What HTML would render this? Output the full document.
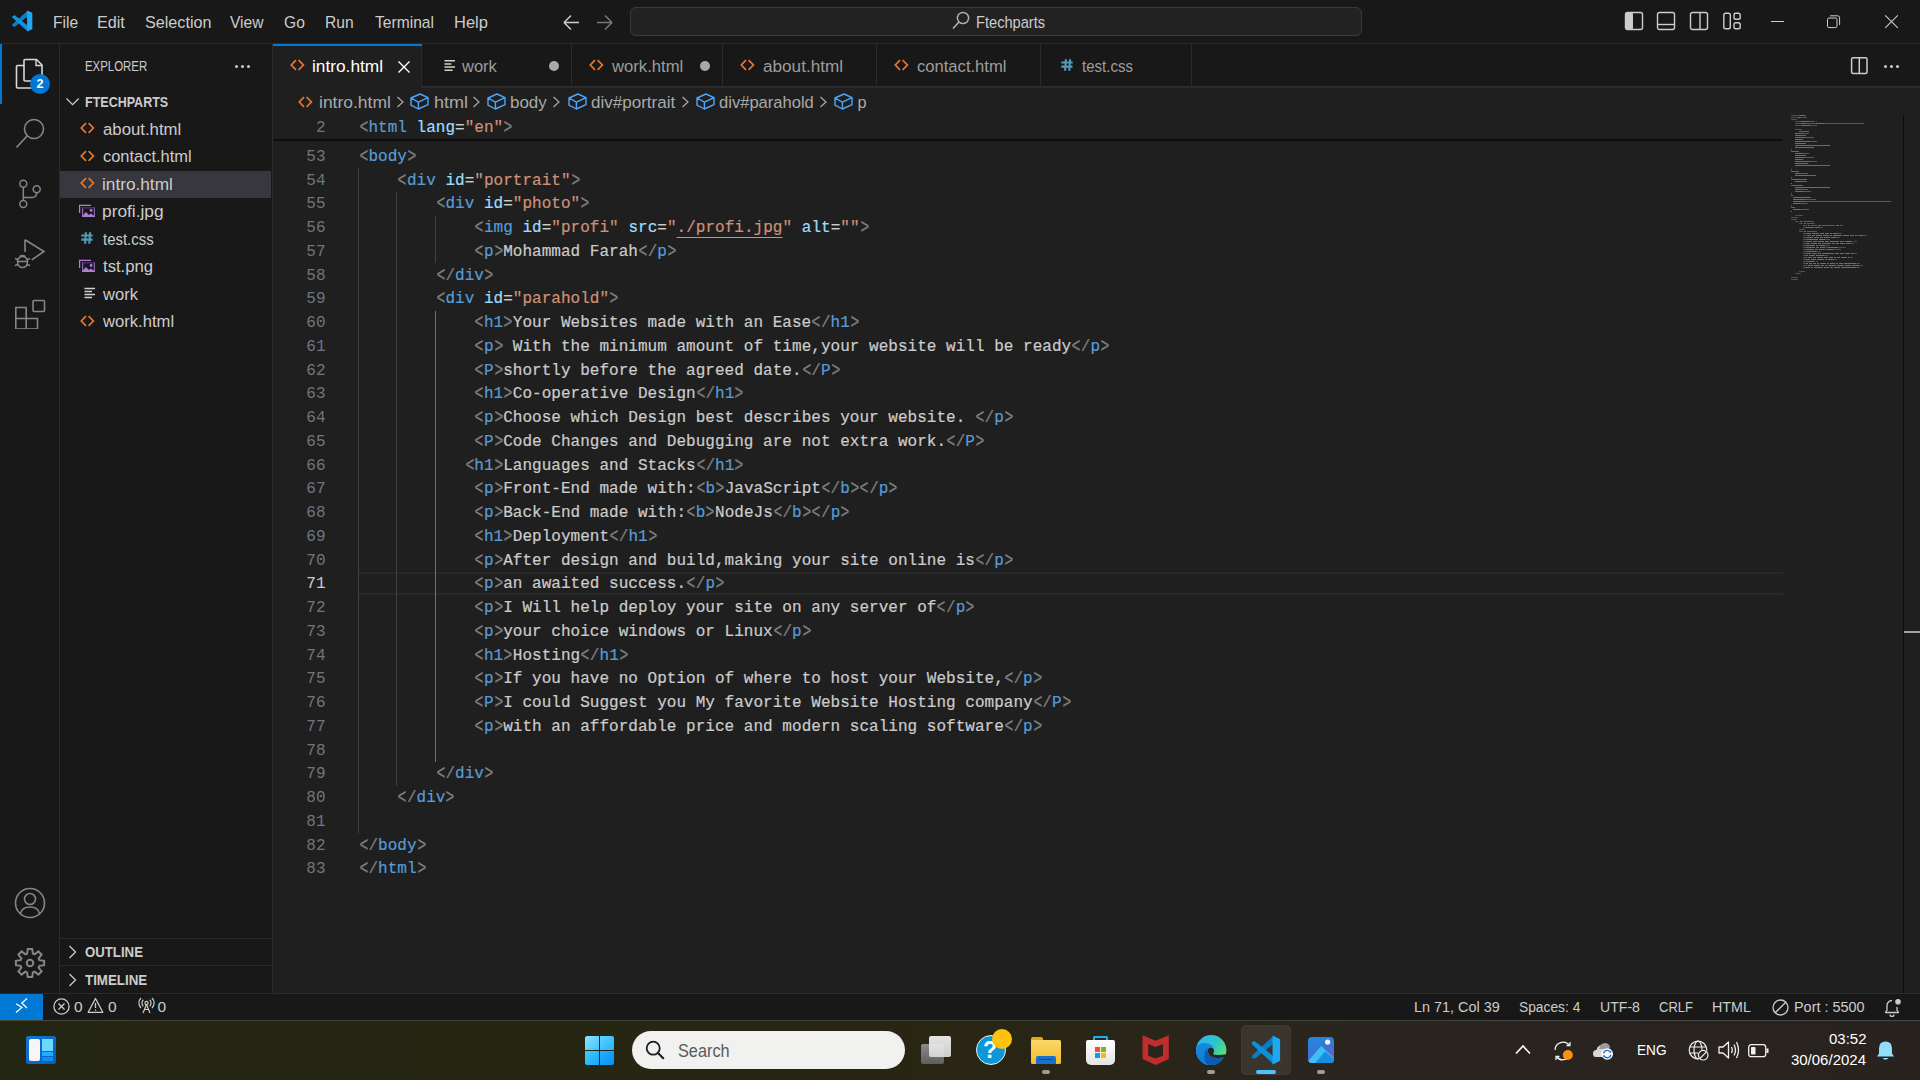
<!DOCTYPE html>
<html><head><meta charset="utf-8">
<style>
*{margin:0;padding:0;box-sizing:border-box}
html,body{width:1920px;height:1080px;overflow:hidden;background:#1f1f1f;font-family:"Liberation Sans",sans-serif;color:#cccccc}
.a{position:absolute}
#title{left:0;top:0;width:1920px;height:44px;background:#181818;border-bottom:1px solid #2b2b2b}
.menu{top:0.3px;height:44px;line-height:44px;font-size:16.25px;color:#cccccc;white-space:nowrap;transform:scaleX(.96);transform-origin:left}
#act{left:0;top:44px;width:60px;height:949px;background:#181818;border-right:1px solid #2b2b2b}
#side{left:60px;top:44px;width:213px;height:949px;background:#181818;border-right:1px solid #2b2b2b}
#tabs{left:273px;top:44px;width:1647px;height:44px;background:#181818}
.tab{top:0;height:44px;background:#181818;border-right:1px solid #2b2b2b;font-size:16px;line-height:43px;color:#9d9d9d;white-space:nowrap}
#editor{left:273px;top:88px;width:1647px;height:905px;background:#1f1f1f}
#status{left:0;top:993px;width:1920px;height:27px;background:#181818;border-top:1px solid #2b2b2b}
#taskbar{left:0;top:1020px;width:1920px;height:60px;background:linear-gradient(90deg,#242614,#282612 45%,#2a2420 75%,#292320)}
.code{font-family:"Liberation Mono",monospace;font-size:16px;white-space:pre;line-height:23.75px;height:23.75px;letter-spacing:0.025px;-webkit-text-stroke:0.2px}
.ln{font-family:"Liberation Mono",monospace;font-size:16px;line-height:23.75px;color:#6e7681;text-align:right;width:60px}
.fl{font-size:16.25px;line-height:27.5px;color:#cccccc;white-space:nowrap}
.tabt{top:0;font-size:16.25px;line-height:44px;white-space:nowrap}
.u{text-decoration:underline;text-underline-offset:5px;text-decoration-thickness:1.3px}
.bct{top:0;font-size:16.25px;line-height:28px;color:#a9a9a9;white-space:nowrap}
.stt{top:-1.5px;transform-origin:left;font-size:15.5px;line-height:27px;color:#cccccc;white-space:nowrap}
.sh{font-size:13.75px;line-height:18px;font-weight:bold;color:#cccccc;transform:scaleX(.9);transform-origin:left;white-space:nowrap}
.t{color:#808080}
.code i{font-style:normal;display:inline-block;transform:translateY(0.8px) scale(0.92,1.22)}.n{color:#569cd6}.at{color:#9cdcfe}.s{color:#ce9178}.x{color:#cccccc}
</style></head><body>
<div id="title" class="a">
 <svg class="a" style="left:11px;top:10px" width="22" height="22" viewBox="0 0 100 100">
  <path d="M75 3 L75 29 L16 77 L3 68 Z" fill="#0a7fc9"/>
  <path d="M75 97 L75 71 L16 23 L3 32 Z" fill="#0e93dd"/>
  <path d="M73 2 L97 13 L97 87 L73 98 Z" fill="#22a8f0"/>
 </svg>
 <div class="a menu" style="left:53px">File</div>
 <div class="a menu" style="left:97px;transform:scaleX(.995)">Edit</div>
 <div class="a menu" style="left:145px;transform:scaleX(.995)">Selection</div>
 <div class="a menu" style="left:230px">View</div>
 <div class="a menu" style="left:284px">Go</div>
 <div class="a menu" style="left:325px">Run</div>
 <div class="a menu" style="left:375px">Terminal</div>
 <div class="a menu" style="left:453.5px;transform:scaleX(1.015)">Help</div>
 <svg class="a" style="left:562px;top:13px" width="19" height="19" viewBox="0 0 19 19"><path d="M2 9.5 H17 M2 9.5 L9 2.5 M2 9.5 L9 16.5" stroke="#cccccc" stroke-width="1.5" fill="none"/></svg>
 <svg class="a" style="left:595px;top:13px" width="19" height="19" viewBox="0 0 19 19"><path d="M17 9.5 H2 M17 9.5 L10 2.5 M17 9.5 L10 16.5" stroke="#7a7a7a" stroke-width="1.5" fill="none"/></svg>
 <div class="a" style="left:630px;top:7px;width:732px;height:29px;background:#222222;border:1px solid #3a3a3a;border-radius:6px"></div>
 <svg class="a" style="left:951px;top:10.2px" width="20" height="20" viewBox="0 0 20 20"><circle cx="12" cy="8" r="5.6" stroke="#b0b0b0" stroke-width="1.5" fill="none"/><path d="M8 12 L2 18.5" stroke="#b0b0b0" stroke-width="1.7"/></svg>
 <div class="a menu" style="left:975.5px;top:-0.4px;transform:scaleX(.9)">Ftechparts</div>
 <!-- layout icons -->
 <svg class="a" style="left:1624px;top:11px" width="20" height="20" viewBox="0 0 20 20"><rect x="1.5" y="1.5" width="17" height="17" rx="2" stroke="#cccccc" stroke-width="1.4" fill="none"/><rect x="1.5" y="1.5" width="7.5" height="17" rx="1.5" fill="#cccccc"/></svg>
 <svg class="a" style="left:1656px;top:11px" width="20" height="20" viewBox="0 0 20 20"><rect x="1.5" y="1.5" width="17" height="17" rx="2" stroke="#cccccc" stroke-width="1.4" fill="none"/><path d="M1.5 13.5 H18.5" stroke="#cccccc" stroke-width="1.4"/></svg>
 <svg class="a" style="left:1689px;top:11px" width="20" height="20" viewBox="0 0 20 20"><rect x="1.5" y="1.5" width="17" height="17" rx="2" stroke="#cccccc" stroke-width="1.4" fill="none"/><path d="M11 1.5 V18.5" stroke="#cccccc" stroke-width="1.4"/></svg>
 <svg class="a" style="left:1722px;top:11px" width="20" height="20" viewBox="0 0 20 20"><rect x="1.8" y="2.2" width="6.5" height="15.6" rx="1.8" stroke="#cccccc" stroke-width="1.4" fill="none"/><rect x="12" y="2.2" width="6.2" height="6" rx="1.8" stroke="#cccccc" stroke-width="1.4" fill="none"/><rect x="12" y="11.8" width="6.2" height="6" rx="1.8" stroke="#cccccc" stroke-width="1.4" fill="none"/></svg>
 <div class="a" style="left:1771px;top:21px;width:13px;height:1px;background:#cccccc"></div>
 <svg class="a" style="left:1826px;top:14px" width="16" height="16" viewBox="0 0 16 16"><rect x="1.5" y="4" width="9.5" height="9.6" rx="1.5" stroke="#cccccc" stroke-width="1" fill="none"/><path d="M4 1.8 H11.5 A2 2 0 0 1 13.6 3.8 V11" stroke="#cccccc" stroke-width="1" fill="none"/></svg>
 <svg class="a" style="left:1884px;top:14px" width="16" height="16" viewBox="0 0 16 16"><path d="M1.2 1.3 L13.8 13.8 M13.8 1.3 L1.2 13.8" stroke="#cccccc" stroke-width="1.1"/></svg>
</div>

<div id="act" class="a">
 <div class="a" style="left:0;top:0;width:2px;height:60px;background:#0078d4"></div>
 <svg class="a" style="left:14px;top:13px" width="32" height="32" viewBox="0 0 32 32">
  <path d="M10 8.5 H3.5 Q2.5 8.5 2.5 9.5 V30 Q2.5 31 3.5 31 H20" stroke="#d7d7d7" stroke-width="1.6" fill="none"/>
  <path d="M11 2.5 Q10 2.5 10 3.5 V23 Q10 24 11 24 H27 Q28 24 28 23 V8 L22.5 2.5 Z" stroke="#d7d7d7" stroke-width="1.6" fill="none"/>
  <path d="M22 2.5 V8.5 H28" stroke="#d7d7d7" stroke-width="1.4" fill="none"/>
 </svg>
 <div class="a" style="left:30px;top:29.5px;width:20px;height:20px;border-radius:50%;background:#0078d4;color:#fff;font-size:12.5px;font-weight:bold;text-align:center;line-height:20px">2</div>
 <svg class="a" style="left:14px;top:73px" width="32" height="32" viewBox="0 0 32 32">
  <circle cx="20" cy="12" r="9.5" stroke="#868686" stroke-width="1.6" fill="none"/>
  <path d="M13.3 18.7 L2.5 30.5" stroke="#868686" stroke-width="1.7"/>
 </svg>
 <svg class="a" style="left:14px;top:133px" width="32" height="32" viewBox="0 0 32 32">
  <circle cx="9.3" cy="6.7" r="3.5" stroke="#868686" stroke-width="1.5" fill="none"/>
  <circle cx="9.3" cy="27" r="3.5" stroke="#868686" stroke-width="1.5" fill="none"/>
  <circle cx="22.7" cy="12.3" r="3.5" stroke="#868686" stroke-width="1.5" fill="none"/>
  <path d="M9.3 10.2 V23.5 M9.3 20.5 H18 Q22.7 20.5 22.7 15.8" stroke="#868686" stroke-width="1.5" fill="none"/>
 </svg>
 <svg class="a" style="left:14px;top:193px" width="32" height="32" viewBox="0 0 32 32">
  <path d="M11 2.8 V15 M11 2.8 L30 14.5 L17.7 22.8" stroke="#868686" stroke-width="1.6" fill="none"/>
  <ellipse cx="8.5" cy="25" rx="5" ry="5.5" stroke="#868686" stroke-width="1.5" fill="none"/>
  <path d="M1 21.5 L4 22.5 M1 28.5 L4 27.5 M16 21.5 L13 22.5 M16 28.5 L13 27.5 M3.5 24.5 H13.5 M5.5 19.5 Q8.5 17.5 11.5 19.5" stroke="#868686" stroke-width="1.4" fill="none"/>
 </svg>
 <svg class="a" style="left:14px;top:253px" width="32" height="32" viewBox="0 0 32 32">
  <path d="M1.8 10.5 H12.2 V21.5 H23.5 V32 H1.8 Z M1.8 21.5 H12.2 V32" stroke="#868686" stroke-width="1.6" fill="none" stroke-linejoin="round"/>
  <rect x="19" y="3.5" width="11.5" height="11" rx="1.2" stroke="#868686" stroke-width="1.6" fill="none"/>
 </svg>
 <svg class="a" style="left:14px;top:843px" width="32" height="32" viewBox="0 0 32 32">
  <circle cx="16" cy="16" r="14.5" stroke="#868686" stroke-width="1.6" fill="none"/>
  <circle cx="16" cy="12" r="5.5" stroke="#868686" stroke-width="1.6" fill="none"/>
  <path d="M6.5 26.5 Q8 20 16 20 Q24 20 25.5 26.5" stroke="#868686" stroke-width="1.6" fill="none"/>
 </svg>
 <svg class="a" style="left:14px;top:903px" width="32" height="32" viewBox="0 0 32 32"><path d="M13.13 6.63 L13.76 1.88 L18.24 1.88 L18.87 6.63 L20.60 7.35 L24.41 4.43 L27.57 7.59 L24.65 11.40 L25.37 13.13 L30.12 13.76 L30.12 18.24 L25.37 18.87 L24.65 20.60 L27.57 24.41 L24.41 27.57 L20.60 24.65 L18.87 25.37 L18.24 30.12 L13.76 30.12 L13.13 25.37 L11.40 24.65 L7.59 27.57 L4.43 24.41 L7.35 20.60 L6.63 18.87 L1.88 18.24 L1.88 13.76 L6.63 13.13 L7.35 11.40 L4.43 7.59 L7.59 4.43 L11.40 7.35 Z" stroke="#868686" stroke-width="2" fill="none" stroke-linejoin="miter"/><circle cx="16" cy="16" r="3.3" stroke="#868686" stroke-width="2" fill="none"/></svg>
</div>

<div id="side" class="a">
 <div class="a" style="left:25px;top:14px;font-size:13.75px;line-height:18px;color:#cccccc;transform:scaleX(.83);transform-origin:left;white-space:nowrap">EXPLORER</div>
 <div class="a" style="left:175px;top:20.5px;width:3px;height:3px;border-radius:50%;background:#cccccc;box-shadow:6px 0 0 #cccccc,12px 0 0 #cccccc"></div>
 <svg class="a" style="left:5px;top:53px" width="16" height="10" viewBox="0 0 16 10"><path d="M1.5 1.5 L7.6 7.6 L13.7 1.5" stroke="#cccccc" stroke-width="1.3" fill="none"/></svg>
 <div class="a" style="left:25px;top:50px;font-size:13.75px;line-height:18px;font-weight:bold;color:#cccccc;transform:scaleX(.91);transform-origin:left;white-space:nowrap">FTECHPARTS</div>
 <div class="a" style="left:0;top:126.5px;width:211px;height:27.5px;background:#37373d"></div>
 <svg class="a" style="left:19px;top:77.0px" width="16" height="14" viewBox="0 0 16 14"><path d="M7 2.2 L2.3 7 L7 11.8 M9.6 2.2 L14.4 7 L9.6 11.8" stroke="#e8772e" stroke-width="1.7" fill="none"/></svg>
<div class="a fl" style="left:42.8px;top:71.5px;transform:scaleX(1.031);transform-origin:left">about.html</div>
<svg class="a" style="left:19px;top:104.5px" width="16" height="14" viewBox="0 0 16 14"><path d="M7 2.2 L2.3 7 L7 11.8 M9.6 2.2 L14.4 7 L9.6 11.8" stroke="#e8772e" stroke-width="1.7" fill="none"/></svg>
<div class="a fl" style="left:42.8px;top:99.0px;transform:scaleX(1.011);transform-origin:left">contact.html</div>
<svg class="a" style="left:19px;top:132.0px" width="16" height="14" viewBox="0 0 16 14"><path d="M7 2.2 L2.3 7 L7 11.8 M9.6 2.2 L14.4 7 L9.6 11.8" stroke="#e8772e" stroke-width="1.7" fill="none"/></svg>
<div class="a fl" style="left:41.8px;top:126.5px;transform:scaleX(1.06);transform-origin:left">intro.html</div>
<svg class="a" style="left:18px;top:160.0px" width="18" height="15" viewBox="0 0 18 15"><path d="M1.6 8.9 V1.4 H13" stroke="#b080d8" stroke-width="1.25" fill="none"/><rect x="4.7" y="3.6" width="11.6" height="8.9" stroke="#a87ad2" stroke-width="1" fill="#1b1520"/><rect x="4.7" y="3.1" width="11.6" height="1.6" fill="#3d2552"/><path d="M4.2 13 L4.2 12.2 L7.9 8 L10.9 11 L12.7 9.6 L16.8 12.2 L16.8 13 Z" fill="#ac7ed6"/><circle cx="13.1" cy="6.4" r="1.35" fill="#b384db"/></svg>
<div class="a fl" style="left:41.8px;top:154.0px;transform:scaleX(1.066);transform-origin:left">profi.jpg</div>
<svg class="a" style="left:21.1px;top:188.1px" width="12" height="12" viewBox="0 0 12 12"><path d="M4.9 0.3 L4.1 11.7 M9.1 0.3 L8.3 11.7 M0.3 3.5 H11.7 M0.3 7.6 H11.5" stroke="#519aba" stroke-width="2.1" fill="none"/></svg>
<div class="a fl" style="left:42.8px;top:181.5px;transform:scaleX(0.92);transform-origin:left">test.css</div>
<svg class="a" style="left:18px;top:215.0px" width="18" height="15" viewBox="0 0 18 15"><path d="M1.6 8.9 V1.4 H13" stroke="#b080d8" stroke-width="1.25" fill="none"/><rect x="4.7" y="3.6" width="11.6" height="8.9" stroke="#a87ad2" stroke-width="1" fill="#1b1520"/><rect x="4.7" y="3.1" width="11.6" height="1.6" fill="#3d2552"/><path d="M4.2 13 L4.2 12.2 L7.9 8 L10.9 11 L12.7 9.6 L16.8 12.2 L16.8 13 Z" fill="#ac7ed6"/><circle cx="13.1" cy="6.4" r="1.35" fill="#b384db"/></svg>
<div class="a fl" style="left:42.8px;top:209.0px;transform:scaleX(1.027);transform-origin:left">tst.png</div>
<svg class="a" style="left:24px;top:243.0px" width="12" height="13" viewBox="0 0 12 13"><path d="M0.5 1.5 H11 M0.5 4.5 H8 M0.5 7.5 H11 M0.5 10.5 H8" stroke="#d0d0d0" stroke-width="1.6"/></svg>
<div class="a fl" style="left:42.8px;top:236.5px;transform:scaleX(1.018);transform-origin:left">work</div>
<svg class="a" style="left:19px;top:269.5px" width="16" height="14" viewBox="0 0 16 14"><path d="M7 2.2 L2.3 7 L7 11.8 M9.6 2.2 L14.4 7 L9.6 11.8" stroke="#e8772e" stroke-width="1.7" fill="none"/></svg>
<div class="a fl" style="left:42.8px;top:264.0px;transform:scaleX(1.023);transform-origin:left">work.html</div>
<div class="a" style="left:0;top:894px;width:212px;height:1px;background:#2b2b2b"></div>
 <svg class="a" style="left:8px;top:901px" width="10" height="14" viewBox="0 0 10 14"><path d="M1.5 1 L7.5 7 L1.5 13" stroke="#cccccc" stroke-width="1.3" fill="none"/></svg>
 <div class="a sh" style="left:25px;top:900px;transform:scaleX(.96)">OUTLINE</div>
 <div class="a" style="left:0;top:921px;width:212px;height:1px;background:#2b2b2b"></div>
 <svg class="a" style="left:8px;top:929px" width="10" height="14" viewBox="0 0 10 14"><path d="M1.5 1 L7.5 7 L1.5 13" stroke="#cccccc" stroke-width="1.3" fill="none"/></svg>
 <div class="a sh" style="left:25px;top:928px;transform:scaleX(.97)">TIMELINE</div>
</div>

<div id="tabs" class="a">
<div class="a" style="left:0;top:42px;width:1647px;height:2px;background:#2b2b2b"></div>
<div class="a" style="left:0px;top:0;width:149px;height:44px;background:#1f1f1f;border-right:1px solid #2b2b2b"></div>
<svg class="a" style="left:16.25px;top:14.45px" width="16" height="14" viewBox="0 0 16 14"><path d="M7 2.2 L2.3 7 L7 11.8 M9.6 2.2 L14.4 7 L9.6 11.8" stroke="#e8772e" stroke-width="1.7" fill="none"/></svg>
<div class="a tabt" style="left:39.0px;color:#ffffff;transform:scaleX(1.063);transform-origin:left">intro.html</div>
<svg class="a" style="left:125px;top:16.5px" width="12" height="12" viewBox="0 0 12 12"><path d="M0.5 0.5 L11.5 11.5 M11.5 0.5 L0.5 11.5" stroke="#ffffff" stroke-width="1.4"/></svg>
<div class="a" style="left:149px;top:0;width:150px;height:42px;background:#181818;border-right:1px solid #2b2b2b"></div>
<svg class="a" style="left:171px;top:14.5px" width="12" height="13" viewBox="0 0 12 13"><path d="M0.5 1.7 H11 M0.5 4.9 H7.3 M0.5 8.1 H11 M0.5 11.2 H8.6" stroke="#d0d0d0" stroke-width="1.5"/></svg>
<div class="a tabt" style="left:189.0px;color:#9d9d9d;transform:scaleX(1.015);transform-origin:left">work</div>
<div class="a" style="left:276px;top:17px;width:10px;height:10px;border-radius:50%;background:#a9a9a9"></div>
<div class="a" style="left:299px;top:0;width:150.5px;height:42px;background:#181818;border-right:1px solid #2b2b2b"></div>
<svg class="a" style="left:315.25px;top:14.45px" width="16" height="14" viewBox="0 0 16 14"><path d="M7 2.2 L2.3 7 L7 11.8 M9.6 2.2 L14.4 7 L9.6 11.8" stroke="#e8772e" stroke-width="1.7" fill="none"/></svg>
<div class="a tabt" style="left:339.0px;color:#9d9d9d;transform:scaleX(1.025);transform-origin:left">work.html</div>
<div class="a" style="left:426.5px;top:17px;width:10px;height:10px;border-radius:50%;background:#a9a9a9"></div>
<div class="a" style="left:449.5px;top:0;width:154.0px;height:42px;background:#181818;border-right:1px solid #2b2b2b"></div>
<svg class="a" style="left:465.75px;top:14.45px" width="16" height="14" viewBox="0 0 16 14"><path d="M7 2.2 L2.3 7 L7 11.8 M9.6 2.2 L14.4 7 L9.6 11.8" stroke="#e8772e" stroke-width="1.7" fill="none"/></svg>
<div class="a tabt" style="left:489.5px;color:#9d9d9d;transform:scaleX(1.055);transform-origin:left">about.html</div>
<div class="a" style="left:603.5px;top:0;width:164.5px;height:42px;background:#181818;border-right:1px solid #2b2b2b"></div>
<svg class="a" style="left:619.75px;top:14.45px" width="16" height="14" viewBox="0 0 16 14"><path d="M7 2.2 L2.3 7 L7 11.8 M9.6 2.2 L14.4 7 L9.6 11.8" stroke="#e8772e" stroke-width="1.7" fill="none"/></svg>
<div class="a tabt" style="left:643.5px;color:#9d9d9d;transform:scaleX(1.021);transform-origin:left">contact.html</div>
<div class="a" style="left:768px;top:0;width:150.5px;height:42px;background:#181818;border-right:1px solid #2b2b2b"></div>
<svg class="a" style="left:787.5px;top:15.200000000000003px" width="12" height="12" viewBox="0 0 12 12"><path d="M4.9 0.3 L4.1 11.7 M9.1 0.3 L8.3 11.7 M0.3 3.5 H11.7 M0.3 7.6 H11.5" stroke="#519aba" stroke-width="2.1" fill="none"/></svg>
<div class="a tabt" style="left:809.0px;color:#9d9d9d;transform:scaleX(0.927);transform-origin:left">test.css</div>
<div class="a" style="left:0;top:0;width:149px;height:1.5px;background:#0078d4"></div>
<svg class="a" style="left:1577px;top:12px" width="20" height="20" viewBox="0 0 20 20"><rect x="1.6" y="1.8" width="15.4" height="15.6" rx="1.5" stroke="#cccccc" stroke-width="1.5" fill="none"/><path d="M9.3 1.8 V17.4" stroke="#cccccc" stroke-width="1.5"/></svg>
<div class="a" style="left:1611px;top:20.5px;width:3px;height:3px;border-radius:50%;background:#cccccc;box-shadow:6px 0 0 #cccccc,12px 0 0 #cccccc"></div>
</div>
<div id="editor" class="a">
<svg class="a" style="left:23.74999999999999px;top:6.9499999999999975px" width="16" height="14" viewBox="0 0 16 14"><path d="M7 2.2 L2.3 7 L7 11.8 M9.6 2.2 L14.4 7 L9.6 11.8" stroke="#e8772e" stroke-width="1.7" fill="none"/></svg>
<div class="a bct" style="left:46.40000000000002px;transform:scaleX(1.075);transform-origin:left">intro.html</div>
<svg class="a" style="left:123px;top:8px" width="9" height="12" viewBox="0 0 9 12"><path d="M1.5 1 L7 6 L1.5 11" stroke="#a9a9a9" stroke-width="1.2" fill="none"/></svg>
<svg class="a" style="left:137.10000000000002px;top:4.600000000000006px" width="19" height="17" viewBox="0 0 19 17"><path d="M1 5 L10 1 L18 4.6 V11.6 L8.4 16 L1 12.2 Z M1 5 L8.4 9.1 L18 4.6 M8.4 9.1 V16" stroke="#4ea6fb" stroke-width="1.4" fill="none" stroke-linejoin="round"/></svg>
<div class="a bct" style="left:160.75px;transform:scaleX(1.11);transform-origin:left">html</div>
<svg class="a" style="left:199px;top:8px" width="9" height="12" viewBox="0 0 9 12"><path d="M1.5 1 L7 6 L1.5 11" stroke="#a9a9a9" stroke-width="1.2" fill="none"/></svg>
<svg class="a" style="left:214.0px;top:4.600000000000006px" width="19" height="17" viewBox="0 0 19 17"><path d="M1 5 L10 1 L18 4.6 V11.6 L8.4 16 L1 12.2 Z M1 5 L8.4 9.1 L18 4.6 M8.4 9.1 V16" stroke="#4ea6fb" stroke-width="1.4" fill="none" stroke-linejoin="round"/></svg>
<div class="a bct" style="left:236.75px;transform:scaleX(1.044);transform-origin:left">body</div>
<svg class="a" style="left:279px;top:8px" width="9" height="12" viewBox="0 0 9 12"><path d="M1.5 1 L7 6 L1.5 11" stroke="#a9a9a9" stroke-width="1.2" fill="none"/></svg>
<svg class="a" style="left:294.5px;top:4.600000000000006px" width="19" height="17" viewBox="0 0 19 17"><path d="M1 5 L10 1 L18 4.6 V11.6 L8.4 16 L1 12.2 Z M1 5 L8.4 9.1 L18 4.6 M8.4 9.1 V16" stroke="#4ea6fb" stroke-width="1.4" fill="none" stroke-linejoin="round"/></svg>
<div class="a bct" style="left:317.75px;transform:scaleX(1.047);transform-origin:left">div#portrait</div>
<svg class="a" style="left:408px;top:8px" width="9" height="12" viewBox="0 0 9 12"><path d="M1.5 1 L7 6 L1.5 11" stroke="#a9a9a9" stroke-width="1.2" fill="none"/></svg>
<svg class="a" style="left:422.5px;top:4.600000000000006px" width="19" height="17" viewBox="0 0 19 17"><path d="M1 5 L10 1 L18 4.6 V11.6 L8.4 16 L1 12.2 Z M1 5 L8.4 9.1 L18 4.6 M8.4 9.1 V16" stroke="#4ea6fb" stroke-width="1.4" fill="none" stroke-linejoin="round"/></svg>
<div class="a bct" style="left:445.75px;transform:scaleX(1.019);transform-origin:left">div#parahold</div>
<svg class="a" style="left:546px;top:8px" width="9" height="12" viewBox="0 0 9 12"><path d="M1.5 1 L7 6 L1.5 11" stroke="#a9a9a9" stroke-width="1.2" fill="none"/></svg>
<svg class="a" style="left:561.1px;top:4.600000000000006px" width="19" height="17" viewBox="0 0 19 17"><path d="M1 5 L10 1 L18 4.6 V11.6 L8.4 16 L1 12.2 Z M1 5 L8.4 9.1 L18 4.6 M8.4 9.1 V16" stroke="#4ea6fb" stroke-width="1.4" fill="none" stroke-linejoin="round"/></svg>
<div class="a bct" style="left:584.5px;transform:scaleX(1.0);transform-origin:left">p</div>
<div class="a" style="left:85.0px;top:484.0px;width:1425.0px;height:23px;border-top:2px solid #282828;border-bottom:2px solid #282828"></div>
<div class="a" style="left:85.00px;top:80.00px;width:1px;height:665.00px;background:#404040"></div>
<div class="a" style="left:123.00px;top:103.75px;width:1px;height:593.75px;background:#404040"></div>
<div class="a" style="left:162.00px;top:127.50px;width:1px;height:47.50px;background:#404040"></div>
<div class="a" style="left:162.00px;top:222.50px;width:1px;height:451.25px;background:#707070"></div>
<div class="a ln" style="left:-7.5px;top:57.85px;color:#6e7681">53</div>
<div class="a code" style="left:85.75px;top:57.85px"><span class="t"><i>&lt;</i></span><span class="n">body</span><span class="t"><i>&gt;</i></span></div>
<div class="a ln" style="left:-7.5px;top:81.60px;color:#6e7681">54</div>
<div class="a code" style="left:85.75px;top:81.60px"><span class="x">    </span><span class="t"><i>&lt;</i></span><span class="n">div</span> <span class="at">id</span><span class="x">=</span><span class="s">&quot;portrait&quot;</span><span class="t"><i>&gt;</i></span></div>
<div class="a ln" style="left:-7.5px;top:105.35px;color:#6e7681">55</div>
<div class="a code" style="left:85.75px;top:105.35px"><span class="x">        </span><span class="t"><i>&lt;</i></span><span class="n">div</span> <span class="at">id</span><span class="x">=</span><span class="s">&quot;photo&quot;</span><span class="t"><i>&gt;</i></span></div>
<div class="a ln" style="left:-7.5px;top:129.10px;color:#6e7681">56</div>
<div class="a code" style="left:85.75px;top:129.10px"><span class="x">            </span><span class="t"><i>&lt;</i></span><span class="n">img</span> <span class="at">id</span><span class="x">=</span><span class="s">&quot;profi&quot;</span> <span class="at">src</span><span class="x">=</span><span class="s">"</span><span class="s u">./profi.jpg</span><span class="s">"</span> <span class="at">alt</span><span class="x">=</span><span class="s">&quot;&quot;</span><span class="t"><i>&gt;</i></span></div>
<div class="a ln" style="left:-7.5px;top:152.85px;color:#6e7681">57</div>
<div class="a code" style="left:85.75px;top:152.85px"><span class="x">            </span><span class="t"><i>&lt;</i></span><span class="n">p</span><span class="t"><i>&gt;</i></span><span class="x">Mohammad Farah</span><span class="t"><i>&lt;</i>/</span><span class="n">p</span><span class="t"><i>&gt;</i></span></div>
<div class="a ln" style="left:-7.5px;top:176.60px;color:#6e7681">58</div>
<div class="a code" style="left:85.75px;top:176.60px"><span class="x">        </span><span class="t"><i>&lt;</i>/</span><span class="n">div</span><span class="t"><i>&gt;</i></span></div>
<div class="a ln" style="left:-7.5px;top:200.35px;color:#6e7681">59</div>
<div class="a code" style="left:85.75px;top:200.35px"><span class="x">        </span><span class="t"><i>&lt;</i></span><span class="n">div</span> <span class="at">id</span><span class="x">=</span><span class="s">&quot;parahold&quot;</span><span class="t"><i>&gt;</i></span></div>
<div class="a ln" style="left:-7.5px;top:224.10px;color:#6e7681">60</div>
<div class="a code" style="left:85.75px;top:224.10px"><span class="x">            </span><span class="t"><i>&lt;</i></span><span class="n">h1</span><span class="t"><i>&gt;</i></span><span class="x">Your Websites made with an Ease</span><span class="t"><i>&lt;</i>/</span><span class="n">h1</span><span class="t"><i>&gt;</i></span></div>
<div class="a ln" style="left:-7.5px;top:247.85px;color:#6e7681">61</div>
<div class="a code" style="left:85.75px;top:247.85px"><span class="x">            </span><span class="t"><i>&lt;</i></span><span class="n">p</span><span class="t"><i>&gt;</i></span><span class="x"> With the minimum amount of time,your website will be ready</span><span class="t"><i>&lt;</i>/</span><span class="n">p</span><span class="t"><i>&gt;</i></span></div>
<div class="a ln" style="left:-7.5px;top:271.60px;color:#6e7681">62</div>
<div class="a code" style="left:85.75px;top:271.60px"><span class="x">            </span><span class="t"><i>&lt;</i></span><span class="n">P</span><span class="t"><i>&gt;</i></span><span class="x">shortly before the agreed date.</span><span class="t"><i>&lt;</i>/</span><span class="n">P</span><span class="t"><i>&gt;</i></span></div>
<div class="a ln" style="left:-7.5px;top:295.35px;color:#6e7681">63</div>
<div class="a code" style="left:85.75px;top:295.35px"><span class="x">            </span><span class="t"><i>&lt;</i></span><span class="n">h1</span><span class="t"><i>&gt;</i></span><span class="x">Co-operative Design</span><span class="t"><i>&lt;</i>/</span><span class="n">h1</span><span class="t"><i>&gt;</i></span></div>
<div class="a ln" style="left:-7.5px;top:319.10px;color:#6e7681">64</div>
<div class="a code" style="left:85.75px;top:319.10px"><span class="x">            </span><span class="t"><i>&lt;</i></span><span class="n">p</span><span class="t"><i>&gt;</i></span><span class="x">Choose which Design best describes your website. </span><span class="t"><i>&lt;</i>/</span><span class="n">p</span><span class="t"><i>&gt;</i></span></div>
<div class="a ln" style="left:-7.5px;top:342.85px;color:#6e7681">65</div>
<div class="a code" style="left:85.75px;top:342.85px"><span class="x">            </span><span class="t"><i>&lt;</i></span><span class="n">P</span><span class="t"><i>&gt;</i></span><span class="x">Code Changes and Debugging are not extra work.</span><span class="t"><i>&lt;</i>/</span><span class="n">P</span><span class="t"><i>&gt;</i></span></div>
<div class="a ln" style="left:-7.5px;top:366.60px;color:#6e7681">66</div>
<div class="a code" style="left:85.75px;top:366.60px"><span class="x">           </span><span class="t"><i>&lt;</i></span><span class="n">h1</span><span class="t"><i>&gt;</i></span><span class="x">Languages and Stacks</span><span class="t"><i>&lt;</i>/</span><span class="n">h1</span><span class="t"><i>&gt;</i></span></div>
<div class="a ln" style="left:-7.5px;top:390.35px;color:#6e7681">67</div>
<div class="a code" style="left:85.75px;top:390.35px"><span class="x">            </span><span class="t"><i>&lt;</i></span><span class="n">p</span><span class="t"><i>&gt;</i></span><span class="x">Front-End made with:</span><span class="t"><i>&lt;</i></span><span class="n">b</span><span class="t"><i>&gt;</i></span><span class="x">JavaScript</span><span class="t"><i>&lt;</i>/</span><span class="n">b</span><span class="t"><i>&gt;</i></span><span class="t"><i>&lt;</i>/</span><span class="n">p</span><span class="t"><i>&gt;</i></span></div>
<div class="a ln" style="left:-7.5px;top:414.10px;color:#6e7681">68</div>
<div class="a code" style="left:85.75px;top:414.10px"><span class="x">            </span><span class="t"><i>&lt;</i></span><span class="n">p</span><span class="t"><i>&gt;</i></span><span class="x">Back-End made with:</span><span class="t"><i>&lt;</i></span><span class="n">b</span><span class="t"><i>&gt;</i></span><span class="x">NodeJs</span><span class="t"><i>&lt;</i>/</span><span class="n">b</span><span class="t"><i>&gt;</i></span><span class="t"><i>&lt;</i>/</span><span class="n">p</span><span class="t"><i>&gt;</i></span></div>
<div class="a ln" style="left:-7.5px;top:437.85px;color:#6e7681">69</div>
<div class="a code" style="left:85.75px;top:437.85px"><span class="x">            </span><span class="t"><i>&lt;</i></span><span class="n">h1</span><span class="t"><i>&gt;</i></span><span class="x">Deployment</span><span class="t"><i>&lt;</i>/</span><span class="n">h1</span><span class="t"><i>&gt;</i></span></div>
<div class="a ln" style="left:-7.5px;top:461.60px;color:#6e7681">70</div>
<div class="a code" style="left:85.75px;top:461.60px"><span class="x">            </span><span class="t"><i>&lt;</i></span><span class="n">p</span><span class="t"><i>&gt;</i></span><span class="x">After design and build,making your site online is</span><span class="t"><i>&lt;</i>/</span><span class="n">p</span><span class="t"><i>&gt;</i></span></div>
<div class="a ln" style="left:-7.5px;top:485.35px;color:#cccccc">71</div>
<div class="a code" style="left:85.75px;top:485.35px"><span class="x">            </span><span class="t"><i>&lt;</i></span><span class="n">p</span><span class="t"><i>&gt;</i></span><span class="x">an awaited success.</span><span class="t"><i>&lt;</i>/</span><span class="n">p</span><span class="t"><i>&gt;</i></span></div>
<div class="a ln" style="left:-7.5px;top:509.10px;color:#6e7681">72</div>
<div class="a code" style="left:85.75px;top:509.10px"><span class="x">            </span><span class="t"><i>&lt;</i></span><span class="n">p</span><span class="t"><i>&gt;</i></span><span class="x">I Will help deploy your site on any server of</span><span class="t"><i>&lt;</i>/</span><span class="n">p</span><span class="t"><i>&gt;</i></span></div>
<div class="a ln" style="left:-7.5px;top:532.85px;color:#6e7681">73</div>
<div class="a code" style="left:85.75px;top:532.85px"><span class="x">            </span><span class="t"><i>&lt;</i></span><span class="n">p</span><span class="t"><i>&gt;</i></span><span class="x">your choice windows or Linux</span><span class="t"><i>&lt;</i>/</span><span class="n">p</span><span class="t"><i>&gt;</i></span></div>
<div class="a ln" style="left:-7.5px;top:556.60px;color:#6e7681">74</div>
<div class="a code" style="left:85.75px;top:556.60px"><span class="x">            </span><span class="t"><i>&lt;</i></span><span class="n">h1</span><span class="t"><i>&gt;</i></span><span class="x">Hosting</span><span class="t"><i>&lt;</i>/</span><span class="n">h1</span><span class="t"><i>&gt;</i></span></div>
<div class="a ln" style="left:-7.5px;top:580.35px;color:#6e7681">75</div>
<div class="a code" style="left:85.75px;top:580.35px"><span class="x">            </span><span class="t"><i>&lt;</i></span><span class="n">p</span><span class="t"><i>&gt;</i></span><span class="x">If you have no Option of where to host your Website,</span><span class="t"><i>&lt;</i>/</span><span class="n">p</span><span class="t"><i>&gt;</i></span></div>
<div class="a ln" style="left:-7.5px;top:604.10px;color:#6e7681">76</div>
<div class="a code" style="left:85.75px;top:604.10px"><span class="x">            </span><span class="t"><i>&lt;</i></span><span class="n">P</span><span class="t"><i>&gt;</i></span><span class="x">I could Suggest you My favorite Website Hosting company</span><span class="t"><i>&lt;</i>/</span><span class="n">P</span><span class="t"><i>&gt;</i></span></div>
<div class="a ln" style="left:-7.5px;top:627.85px;color:#6e7681">77</div>
<div class="a code" style="left:85.75px;top:627.85px"><span class="x">            </span><span class="t"><i>&lt;</i></span><span class="n">p</span><span class="t"><i>&gt;</i></span><span class="x">with an affordable price and modern scaling software</span><span class="t"><i>&lt;</i>/</span><span class="n">p</span><span class="t"><i>&gt;</i></span></div>
<div class="a ln" style="left:-7.5px;top:651.60px;color:#6e7681">78</div>
<div class="a code" style="left:85.75px;top:651.60px"></div>
<div class="a ln" style="left:-7.5px;top:675.35px;color:#6e7681">79</div>
<div class="a code" style="left:85.75px;top:675.35px"><span class="x">        </span><span class="t"><i>&lt;</i>/</span><span class="n">div</span><span class="t"><i>&gt;</i></span></div>
<div class="a ln" style="left:-7.5px;top:699.10px;color:#6e7681">80</div>
<div class="a code" style="left:85.75px;top:699.10px"><span class="x">    </span><span class="t"><i>&lt;</i>/</span><span class="n">div</span><span class="t"><i>&gt;</i></span></div>
<div class="a ln" style="left:-7.5px;top:722.85px;color:#6e7681">81</div>
<div class="a code" style="left:85.75px;top:722.85px"></div>
<div class="a ln" style="left:-7.5px;top:746.60px;color:#6e7681">82</div>
<div class="a code" style="left:85.75px;top:746.60px"><span class="t"><i>&lt;</i>/</span><span class="n">body</span><span class="t"><i>&gt;</i></span></div>
<div class="a ln" style="left:-7.5px;top:770.35px;color:#6e7681">83</div>
<div class="a code" style="left:85.75px;top:770.35px"><span class="t"><i>&lt;</i>/</span><span class="n">html</span><span class="t"><i>&gt;</i></span></div>
<div class="a" style="left:0;top:27.5px;width:1510px;height:23.75px;background:#1f1f1f"></div>
<div class="a" style="left:0;top:51.25px;width:1510px;height:3px;background:linear-gradient(180deg,rgba(0,0,0,.85),rgba(0,0,0,0))"></div>
<div class="a ln" style="left:-7.5px;top:29.1px">2</div>
<div class="a code" style="left:85.75px;top:29.1px"><span class="t"><i>&lt;</i></span><span class="n">html</span> <span class="at">lang</span><span class="x">=</span><span class="s">&quot;en&quot;</span><span class="t"><i>&gt;</i></span></div>
<div class="a" style="left:0.00px;top:0;width:0;height:0">
<div class="a" style="left:1518.25px;top:26.80px;width:1.94px;height:1.6px;background:#808080;opacity:.45"></div>
<div class="a" style="left:1520.19px;top:26.80px;width:6.79px;height:1.6px;background:#569cd6;opacity:.45"></div>
<div class="a" style="left:1526.98px;top:26.80px;width:4.85px;height:1.6px;background:#9cdcfe;opacity:.45"></div>
<div class="a" style="left:1531.83px;top:26.80px;width:0.97px;height:1.6px;background:#808080;opacity:.45"></div>
<div class="a" style="left:1518.25px;top:28.80px;width:0.97px;height:1.6px;background:#808080;opacity:.45"></div>
<div class="a" style="left:1519.22px;top:28.80px;width:3.88px;height:1.6px;background:#569cd6;opacity:.45"></div>
<div class="a" style="left:1524.07px;top:28.80px;width:3.88px;height:1.6px;background:#9cdcfe;opacity:.45"></div>
<div class="a" style="left:1528.92px;top:28.80px;width:3.88px;height:1.6px;background:#ce9178;opacity:.45"></div>
<div class="a" style="left:1532.80px;top:28.80px;width:0.97px;height:1.6px;background:#808080;opacity:.45"></div>
<div class="a" style="left:1518.25px;top:30.80px;width:0.97px;height:1.6px;background:#808080;opacity:.45"></div>
<div class="a" style="left:1519.22px;top:30.80px;width:3.88px;height:1.6px;background:#569cd6;opacity:.45"></div>
<div class="a" style="left:1523.10px;top:30.80px;width:0.97px;height:1.6px;background:#808080;opacity:.45"></div>
<div class="a" style="left:1522.13px;top:32.80px;width:0.97px;height:1.6px;background:#808080;opacity:.45"></div>
<div class="a" style="left:1523.10px;top:32.80px;width:4.85px;height:1.6px;background:#569cd6;opacity:.45"></div>
<div class="a" style="left:1527.95px;top:32.80px;width:7.76px;height:1.6px;background:#9cdcfe;opacity:.45"></div>
<div class="a" style="left:1535.71px;top:32.80px;width:6.79px;height:1.6px;background:#ce9178;opacity:.45"></div>
<div class="a" style="left:1542.50px;top:32.80px;width:0.97px;height:1.6px;background:#808080;opacity:.45"></div>
<div class="a" style="left:1522.13px;top:34.80px;width:0.97px;height:1.6px;background:#808080;opacity:.45"></div>
<div class="a" style="left:1523.10px;top:34.80px;width:4.85px;height:1.6px;background:#569cd6;opacity:.45"></div>
<div class="a" style="left:1527.95px;top:34.80px;width:4.85px;height:1.6px;background:#9cdcfe;opacity:.45"></div>
<div class="a" style="left:1532.80px;top:34.80px;width:10.67px;height:1.6px;background:#ce9178;opacity:.45"></div>
<div class="a" style="left:1543.47px;top:34.80px;width:7.76px;height:1.6px;background:#9cdcfe;opacity:.45"></div>
<div class="a" style="left:1551.23px;top:34.80px;width:38.80px;height:1.6px;background:#ce9178;opacity:.45"></div>
<div class="a" style="left:1590.03px;top:34.80px;width:0.97px;height:1.6px;background:#808080;opacity:.45"></div>
<div class="a" style="left:1522.13px;top:36.80px;width:0.97px;height:1.6px;background:#808080;opacity:.45"></div>
<div class="a" style="left:1523.10px;top:36.80px;width:5.82px;height:1.6px;background:#569cd6;opacity:.45"></div>
<div class="a" style="left:1528.92px;top:36.80px;width:7.76px;height:1.6px;background:#cccccc;opacity:.45"></div>
<div class="a" style="left:1536.68px;top:36.80px;width:7.76px;height:1.6px;background:#569cd6;opacity:.45"></div>
<div class="a" style="left:1522.13px;top:40.80px;width:0.97px;height:1.6px;background:#808080;opacity:.45"></div>
<div class="a" style="left:1523.10px;top:40.80px;width:5.82px;height:1.6px;background:#569cd6;opacity:.45"></div>
<div class="a" style="left:1526.01px;top:42.80px;width:9.70px;height:1.6px;background:#d7ba7d;opacity:.45"></div>
<div class="a" style="left:1522.13px;top:44.80px;width:7.76px;height:1.6px;background:#9cdcfe;opacity:.45"></div>
<div class="a" style="left:1529.89px;top:44.80px;width:5.82px;height:1.6px;background:#ce9178;opacity:.45"></div>
<div class="a" style="left:1522.13px;top:46.80px;width:5.82px;height:1.6px;background:#9cdcfe;opacity:.45"></div>
<div class="a" style="left:1527.95px;top:46.80px;width:4.85px;height:1.6px;background:#b5cea8;opacity:.45"></div>
<div class="a" style="left:1522.13px;top:48.80px;width:9.70px;height:1.6px;background:#9cdcfe;opacity:.45"></div>
<div class="a" style="left:1531.83px;top:48.80px;width:8.73px;height:1.6px;background:#ce9178;opacity:.45"></div>
<div class="a" style="left:1522.13px;top:50.80px;width:4.85px;height:1.6px;background:#9cdcfe;opacity:.45"></div>
<div class="a" style="left:1526.98px;top:50.80px;width:2.91px;height:1.6px;background:#b5cea8;opacity:.45"></div>
<div class="a" style="left:1522.13px;top:52.80px;width:14.55px;height:1.6px;background:#9cdcfe;opacity:.45"></div>
<div class="a" style="left:1536.68px;top:52.80px;width:7.76px;height:1.6px;background:#ce9178;opacity:.45"></div>
<div class="a" style="left:1522.13px;top:54.80px;width:6.79px;height:1.6px;background:#9cdcfe;opacity:.45"></div>
<div class="a" style="left:1528.92px;top:54.80px;width:3.88px;height:1.6px;background:#b5cea8;opacity:.45"></div>
<div class="a" style="left:1522.13px;top:56.80px;width:16.49px;height:1.6px;background:#9cdcfe;opacity:.45"></div>
<div class="a" style="left:1538.62px;top:56.80px;width:4.85px;height:1.6px;background:#cccccc;opacity:.45"></div>
<div class="a" style="left:1543.47px;top:56.80px;width:2.91px;height:1.6px;background:#b5cea8;opacity:.45"></div>
<div class="a" style="left:1546.38px;top:56.80px;width:0.97px;height:1.6px;background:#cccccc;opacity:.45"></div>
<div class="a" style="left:1547.35px;top:56.80px;width:3.88px;height:1.6px;background:#b5cea8;opacity:.45"></div>
<div class="a" style="left:1551.23px;top:56.80px;width:0.97px;height:1.6px;background:#cccccc;opacity:.45"></div>
<div class="a" style="left:1552.20px;top:56.80px;width:4.85px;height:1.6px;background:#b5cea8;opacity:.45"></div>
<div class="a" style="left:1522.13px;top:58.80px;width:13.58px;height:1.6px;background:#9cdcfe;opacity:.45"></div>
<div class="a" style="left:1535.71px;top:58.80px;width:4.85px;height:1.6px;background:#b5cea8;opacity:.45"></div>
<div class="a" style="left:1518.25px;top:60.80px;width:0.97px;height:1.6px;background:#cccccc;opacity:.45"></div>
<div class="a" style="left:1518.25px;top:62.80px;width:7.76px;height:1.6px;background:#d7ba7d;opacity:.45"></div>
<div class="a" style="left:1522.13px;top:64.80px;width:7.76px;height:1.6px;background:#9cdcfe;opacity:.45"></div>
<div class="a" style="left:1529.89px;top:64.80px;width:5.82px;height:1.6px;background:#ce9178;opacity:.45"></div>
<div class="a" style="left:1522.13px;top:66.80px;width:5.82px;height:1.6px;background:#9cdcfe;opacity:.45"></div>
<div class="a" style="left:1527.95px;top:66.80px;width:4.85px;height:1.6px;background:#b5cea8;opacity:.45"></div>
<div class="a" style="left:1522.13px;top:68.80px;width:9.70px;height:1.6px;background:#9cdcfe;opacity:.45"></div>
<div class="a" style="left:1531.83px;top:68.80px;width:8.73px;height:1.6px;background:#ce9178;opacity:.45"></div>
<div class="a" style="left:1522.13px;top:70.80px;width:4.85px;height:1.6px;background:#9cdcfe;opacity:.45"></div>
<div class="a" style="left:1526.98px;top:70.80px;width:2.91px;height:1.6px;background:#b5cea8;opacity:.45"></div>
<div class="a" style="left:1522.13px;top:72.80px;width:14.55px;height:1.6px;background:#9cdcfe;opacity:.45"></div>
<div class="a" style="left:1536.68px;top:72.80px;width:7.76px;height:1.6px;background:#ce9178;opacity:.45"></div>
<div class="a" style="left:1522.13px;top:74.80px;width:6.79px;height:1.6px;background:#9cdcfe;opacity:.45"></div>
<div class="a" style="left:1528.92px;top:74.80px;width:5.82px;height:1.6px;background:#b5cea8;opacity:.45"></div>
<div class="a" style="left:1522.13px;top:76.80px;width:16.49px;height:1.6px;background:#9cdcfe;opacity:.45"></div>
<div class="a" style="left:1538.62px;top:76.80px;width:4.85px;height:1.6px;background:#cccccc;opacity:.45"></div>
<div class="a" style="left:1543.47px;top:76.80px;width:2.91px;height:1.6px;background:#b5cea8;opacity:.45"></div>
<div class="a" style="left:1546.38px;top:76.80px;width:0.97px;height:1.6px;background:#cccccc;opacity:.45"></div>
<div class="a" style="left:1547.35px;top:76.80px;width:3.88px;height:1.6px;background:#b5cea8;opacity:.45"></div>
<div class="a" style="left:1551.23px;top:76.80px;width:0.97px;height:1.6px;background:#cccccc;opacity:.45"></div>
<div class="a" style="left:1552.20px;top:76.80px;width:4.85px;height:1.6px;background:#b5cea8;opacity:.45"></div>
<div class="a" style="left:1518.25px;top:80.80px;width:0.97px;height:1.6px;background:#cccccc;opacity:.45"></div>
<div class="a" style="left:1518.25px;top:82.80px;width:7.76px;height:1.6px;background:#d7ba7d;opacity:.45"></div>
<div class="a" style="left:1522.13px;top:84.80px;width:5.82px;height:1.6px;background:#9cdcfe;opacity:.45"></div>
<div class="a" style="left:1527.95px;top:84.80px;width:6.79px;height:1.6px;background:#ce9178;opacity:.45"></div>
<div class="a" style="left:1522.13px;top:86.80px;width:14.55px;height:1.6px;background:#9cdcfe;opacity:.45"></div>
<div class="a" style="left:1536.68px;top:86.80px;width:6.79px;height:1.6px;background:#b5cea8;opacity:.45"></div>
<div class="a" style="left:1518.25px;top:88.80px;width:0.97px;height:1.6px;background:#cccccc;opacity:.45"></div>
<div class="a" style="left:1518.25px;top:90.80px;width:15.52px;height:1.6px;background:#d7ba7d;opacity:.45"></div>
<div class="a" style="left:1522.13px;top:92.80px;width:5.82px;height:1.6px;background:#9cdcfe;opacity:.45"></div>
<div class="a" style="left:1527.95px;top:92.80px;width:5.82px;height:1.6px;background:#b5cea8;opacity:.45"></div>
<div class="a" style="left:1518.25px;top:94.80px;width:0.97px;height:1.6px;background:#cccccc;opacity:.45"></div>
<div class="a" style="left:1518.25px;top:96.80px;width:11.64px;height:1.6px;background:#d7ba7d;opacity:.45"></div>
<div class="a" style="left:1522.13px;top:98.80px;width:16.49px;height:1.6px;background:#9cdcfe;opacity:.45"></div>
<div class="a" style="left:1538.62px;top:98.80px;width:4.85px;height:1.6px;background:#cccccc;opacity:.45"></div>
<div class="a" style="left:1543.47px;top:98.80px;width:2.91px;height:1.6px;background:#b5cea8;opacity:.45"></div>
<div class="a" style="left:1546.38px;top:98.80px;width:0.97px;height:1.6px;background:#cccccc;opacity:.45"></div>
<div class="a" style="left:1547.35px;top:98.80px;width:3.88px;height:1.6px;background:#b5cea8;opacity:.45"></div>
<div class="a" style="left:1551.23px;top:98.80px;width:0.97px;height:1.6px;background:#cccccc;opacity:.45"></div>
<div class="a" style="left:1552.20px;top:98.80px;width:4.85px;height:1.6px;background:#b5cea8;opacity:.45"></div>
<div class="a" style="left:1522.13px;top:100.80px;width:5.82px;height:1.6px;background:#9cdcfe;opacity:.45"></div>
<div class="a" style="left:1527.95px;top:100.80px;width:6.79px;height:1.6px;background:#ce9178;opacity:.45"></div>
<div class="a" style="left:1522.13px;top:102.80px;width:7.76px;height:1.6px;background:#9cdcfe;opacity:.45"></div>
<div class="a" style="left:1529.89px;top:102.80px;width:7.76px;height:1.6px;background:#ce9178;opacity:.45"></div>
<div class="a" style="left:1518.25px;top:104.80px;width:0.97px;height:1.6px;background:#cccccc;opacity:.45"></div>
<div class="a" style="left:1518.25px;top:106.80px;width:1.94px;height:1.6px;background:#d7ba7d;opacity:.45"></div>
<div class="a" style="left:1520.19px;top:108.80px;width:11.64px;height:1.6px;background:#9cdcfe;opacity:.45"></div>
<div class="a" style="left:1531.83px;top:108.80px;width:5.82px;height:1.6px;background:#b5cea8;opacity:.45"></div>
<div class="a" style="left:1520.19px;top:110.80px;width:11.64px;height:1.6px;background:#9cdcfe;opacity:.45"></div>
<div class="a" style="left:1531.83px;top:110.80px;width:11.64px;height:1.6px;background:#ce9178;opacity:.45"></div>
<div class="a" style="left:1520.19px;top:112.80px;width:12.61px;height:1.6px;background:#9cdcfe;opacity:.45"></div>
<div class="a" style="left:1532.80px;top:112.80px;width:85.36px;height:1.6px;background:#ce9178;opacity:.45"></div>
<div class="a" style="left:1520.19px;top:114.80px;width:6.79px;height:1.6px;background:#9cdcfe;opacity:.45"></div>
<div class="a" style="left:1526.98px;top:114.80px;width:7.76px;height:1.6px;background:#ce9178;opacity:.45"></div>
<div class="a" style="left:1518.25px;top:116.80px;width:0.97px;height:1.6px;background:#cccccc;opacity:.45"></div>
<div class="a" style="left:1518.25px;top:118.80px;width:3.88px;height:1.6px;background:#d7ba7d;opacity:.45"></div>
<div class="a" style="left:1520.19px;top:120.80px;width:6.79px;height:1.6px;background:#9cdcfe;opacity:.45"></div>
<div class="a" style="left:1526.98px;top:120.80px;width:8.73px;height:1.6px;background:#ce9178;opacity:.45"></div>
<div class="a" style="left:1518.25px;top:122.80px;width:0.97px;height:1.6px;background:#cccccc;opacity:.45"></div>
<div class="a" style="left:1522.13px;top:126.80px;width:1.94px;height:1.6px;background:#808080;opacity:.45"></div>
<div class="a" style="left:1524.07px;top:126.80px;width:4.85px;height:1.6px;background:#569cd6;opacity:.45"></div>
<div class="a" style="left:1528.92px;top:126.80px;width:0.97px;height:1.6px;background:#808080;opacity:.45"></div>
<div class="a" style="left:1518.25px;top:128.80px;width:1.94px;height:1.6px;background:#808080;opacity:.45"></div>
<div class="a" style="left:1520.19px;top:128.80px;width:3.88px;height:1.6px;background:#569cd6;opacity:.45"></div>
<div class="a" style="left:1524.07px;top:128.80px;width:0.97px;height:1.6px;background:#808080;opacity:.45"></div>
<div class="a" style="left:1518.25px;top:130.80px;width:0.97px;height:1.6px;background:#808080;opacity:.45"></div>
<div class="a" style="left:1519.22px;top:130.80px;width:3.88px;height:1.6px;background:#569cd6;opacity:.45"></div>
<div class="a" style="left:1523.10px;top:130.80px;width:0.97px;height:1.6px;background:#808080;opacity:.45"></div>
<div class="a" style="left:1522.13px;top:132.80px;width:0.97px;height:1.6px;background:#808080;opacity:.45"></div>
<div class="a" style="left:1523.10px;top:132.80px;width:2.91px;height:1.6px;background:#569cd6;opacity:.45"></div>
<div class="a" style="left:1526.98px;top:132.80px;width:1.94px;height:1.6px;background:#9cdcfe;opacity:.45"></div>
<div class="a" style="left:1529.89px;top:132.80px;width:9.70px;height:1.6px;background:#ce9178;opacity:.45"></div>
<div class="a" style="left:1539.59px;top:132.80px;width:0.97px;height:1.6px;background:#808080;opacity:.45"></div>
<div class="a" style="left:1526.01px;top:134.80px;width:0.97px;height:1.6px;background:#808080;opacity:.45"></div>
<div class="a" style="left:1526.98px;top:134.80px;width:2.91px;height:1.6px;background:#569cd6;opacity:.45"></div>
<div class="a" style="left:1530.86px;top:134.80px;width:1.94px;height:1.6px;background:#9cdcfe;opacity:.45"></div>
<div class="a" style="left:1533.77px;top:134.80px;width:6.79px;height:1.6px;background:#ce9178;opacity:.45"></div>
<div class="a" style="left:1540.56px;top:134.80px;width:0.97px;height:1.6px;background:#808080;opacity:.45"></div>
<div class="a" style="left:1529.89px;top:136.80px;width:0.97px;height:1.6px;background:#808080;opacity:.45"></div>
<div class="a" style="left:1530.86px;top:136.80px;width:2.91px;height:1.6px;background:#569cd6;opacity:.45"></div>
<div class="a" style="left:1534.74px;top:136.80px;width:1.94px;height:1.6px;background:#9cdcfe;opacity:.45"></div>
<div class="a" style="left:1537.65px;top:136.80px;width:6.79px;height:1.6px;background:#ce9178;opacity:.45"></div>
<div class="a" style="left:1545.41px;top:136.80px;width:2.91px;height:1.6px;background:#9cdcfe;opacity:.45"></div>
<div class="a" style="left:1549.29px;top:136.80px;width:12.61px;height:1.6px;background:#ce9178;opacity:.45"></div>
<div class="a" style="left:1562.87px;top:136.80px;width:2.91px;height:1.6px;background:#9cdcfe;opacity:.45"></div>
<div class="a" style="left:1566.75px;top:136.80px;width:1.94px;height:1.6px;background:#ce9178;opacity:.45"></div>
<div class="a" style="left:1568.69px;top:136.80px;width:0.97px;height:1.6px;background:#808080;opacity:.45"></div>
<div class="a" style="left:1529.89px;top:138.80px;width:0.97px;height:1.6px;background:#808080;opacity:.45"></div>
<div class="a" style="left:1530.86px;top:138.80px;width:0.97px;height:1.6px;background:#569cd6;opacity:.45"></div>
<div class="a" style="left:1531.83px;top:138.80px;width:0.97px;height:1.6px;background:#808080;opacity:.45"></div>
<div class="a" style="left:1532.80px;top:138.80px;width:7.76px;height:1.6px;background:#cccccc;opacity:.45"></div>
<div class="a" style="left:1541.53px;top:138.80px;width:4.85px;height:1.6px;background:#cccccc;opacity:.45"></div>
<div class="a" style="left:1546.38px;top:138.80px;width:1.94px;height:1.6px;background:#808080;opacity:.45"></div>
<div class="a" style="left:1548.32px;top:138.80px;width:0.97px;height:1.6px;background:#569cd6;opacity:.45"></div>
<div class="a" style="left:1549.29px;top:138.80px;width:0.97px;height:1.6px;background:#808080;opacity:.45"></div>
<div class="a" style="left:1526.01px;top:140.80px;width:1.94px;height:1.6px;background:#808080;opacity:.45"></div>
<div class="a" style="left:1527.95px;top:140.80px;width:2.91px;height:1.6px;background:#569cd6;opacity:.45"></div>
<div class="a" style="left:1530.86px;top:140.80px;width:0.97px;height:1.6px;background:#808080;opacity:.45"></div>
<div class="a" style="left:1526.01px;top:142.80px;width:0.97px;height:1.6px;background:#808080;opacity:.45"></div>
<div class="a" style="left:1526.98px;top:142.80px;width:2.91px;height:1.6px;background:#569cd6;opacity:.45"></div>
<div class="a" style="left:1530.86px;top:142.80px;width:1.94px;height:1.6px;background:#9cdcfe;opacity:.45"></div>
<div class="a" style="left:1533.77px;top:142.80px;width:9.70px;height:1.6px;background:#ce9178;opacity:.45"></div>
<div class="a" style="left:1543.47px;top:142.80px;width:0.97px;height:1.6px;background:#808080;opacity:.45"></div>
<div class="a" style="left:1529.89px;top:144.80px;width:0.97px;height:1.6px;background:#808080;opacity:.45"></div>
<div class="a" style="left:1530.86px;top:144.80px;width:1.94px;height:1.6px;background:#569cd6;opacity:.45"></div>
<div class="a" style="left:1532.80px;top:144.80px;width:0.97px;height:1.6px;background:#808080;opacity:.45"></div>
<div class="a" style="left:1533.77px;top:144.80px;width:3.88px;height:1.6px;background:#cccccc;opacity:.45"></div>
<div class="a" style="left:1538.62px;top:144.80px;width:7.76px;height:1.6px;background:#cccccc;opacity:.45"></div>
<div class="a" style="left:1547.35px;top:144.80px;width:3.88px;height:1.6px;background:#cccccc;opacity:.45"></div>
<div class="a" style="left:1552.20px;top:144.80px;width:3.88px;height:1.6px;background:#cccccc;opacity:.45"></div>
<div class="a" style="left:1557.05px;top:144.80px;width:1.94px;height:1.6px;background:#cccccc;opacity:.45"></div>
<div class="a" style="left:1559.96px;top:144.80px;width:3.88px;height:1.6px;background:#cccccc;opacity:.45"></div>
<div class="a" style="left:1563.84px;top:144.80px;width:1.94px;height:1.6px;background:#808080;opacity:.45"></div>
<div class="a" style="left:1565.78px;top:144.80px;width:1.94px;height:1.6px;background:#569cd6;opacity:.45"></div>
<div class="a" style="left:1567.72px;top:144.80px;width:0.97px;height:1.6px;background:#808080;opacity:.45"></div>
<div class="a" style="left:1529.89px;top:146.80px;width:0.97px;height:1.6px;background:#808080;opacity:.45"></div>
<div class="a" style="left:1530.86px;top:146.80px;width:0.97px;height:1.6px;background:#569cd6;opacity:.45"></div>
<div class="a" style="left:1531.83px;top:146.80px;width:0.97px;height:1.6px;background:#808080;opacity:.45"></div>
<div class="a" style="left:1533.77px;top:146.80px;width:3.88px;height:1.6px;background:#cccccc;opacity:.45"></div>
<div class="a" style="left:1538.62px;top:146.80px;width:2.91px;height:1.6px;background:#cccccc;opacity:.45"></div>
<div class="a" style="left:1542.50px;top:146.80px;width:6.79px;height:1.6px;background:#cccccc;opacity:.45"></div>
<div class="a" style="left:1550.26px;top:146.80px;width:5.82px;height:1.6px;background:#cccccc;opacity:.45"></div>
<div class="a" style="left:1557.05px;top:146.80px;width:1.94px;height:1.6px;background:#cccccc;opacity:.45"></div>
<div class="a" style="left:1559.96px;top:146.80px;width:8.73px;height:1.6px;background:#cccccc;opacity:.45"></div>
<div class="a" style="left:1569.66px;top:146.80px;width:6.79px;height:1.6px;background:#cccccc;opacity:.45"></div>
<div class="a" style="left:1577.42px;top:146.80px;width:3.88px;height:1.6px;background:#cccccc;opacity:.45"></div>
<div class="a" style="left:1582.27px;top:146.80px;width:1.94px;height:1.6px;background:#cccccc;opacity:.45"></div>
<div class="a" style="left:1585.18px;top:146.80px;width:4.85px;height:1.6px;background:#cccccc;opacity:.45"></div>
<div class="a" style="left:1590.03px;top:146.80px;width:1.94px;height:1.6px;background:#808080;opacity:.45"></div>
<div class="a" style="left:1591.97px;top:146.80px;width:0.97px;height:1.6px;background:#569cd6;opacity:.45"></div>
<div class="a" style="left:1592.94px;top:146.80px;width:0.97px;height:1.6px;background:#808080;opacity:.45"></div>
<div class="a" style="left:1529.89px;top:148.80px;width:0.97px;height:1.6px;background:#808080;opacity:.45"></div>
<div class="a" style="left:1530.86px;top:148.80px;width:0.97px;height:1.6px;background:#569cd6;opacity:.45"></div>
<div class="a" style="left:1531.83px;top:148.80px;width:0.97px;height:1.6px;background:#808080;opacity:.45"></div>
<div class="a" style="left:1532.80px;top:148.80px;width:6.79px;height:1.6px;background:#cccccc;opacity:.45"></div>
<div class="a" style="left:1540.56px;top:148.80px;width:5.82px;height:1.6px;background:#cccccc;opacity:.45"></div>
<div class="a" style="left:1547.35px;top:148.80px;width:2.91px;height:1.6px;background:#cccccc;opacity:.45"></div>
<div class="a" style="left:1551.23px;top:148.80px;width:5.82px;height:1.6px;background:#cccccc;opacity:.45"></div>
<div class="a" style="left:1558.02px;top:148.80px;width:4.85px;height:1.6px;background:#cccccc;opacity:.45"></div>
<div class="a" style="left:1562.87px;top:148.80px;width:1.94px;height:1.6px;background:#808080;opacity:.45"></div>
<div class="a" style="left:1564.81px;top:148.80px;width:0.97px;height:1.6px;background:#569cd6;opacity:.45"></div>
<div class="a" style="left:1565.78px;top:148.80px;width:0.97px;height:1.6px;background:#808080;opacity:.45"></div>
<div class="a" style="left:1529.89px;top:150.80px;width:0.97px;height:1.6px;background:#808080;opacity:.45"></div>
<div class="a" style="left:1530.86px;top:150.80px;width:1.94px;height:1.6px;background:#569cd6;opacity:.45"></div>
<div class="a" style="left:1532.80px;top:150.80px;width:0.97px;height:1.6px;background:#808080;opacity:.45"></div>
<div class="a" style="left:1533.77px;top:150.80px;width:11.64px;height:1.6px;background:#cccccc;opacity:.45"></div>
<div class="a" style="left:1546.38px;top:150.80px;width:5.82px;height:1.6px;background:#cccccc;opacity:.45"></div>
<div class="a" style="left:1552.20px;top:150.80px;width:1.94px;height:1.6px;background:#808080;opacity:.45"></div>
<div class="a" style="left:1554.14px;top:150.80px;width:1.94px;height:1.6px;background:#569cd6;opacity:.45"></div>
<div class="a" style="left:1556.08px;top:150.80px;width:0.97px;height:1.6px;background:#808080;opacity:.45"></div>
<div class="a" style="left:1529.89px;top:152.80px;width:0.97px;height:1.6px;background:#808080;opacity:.45"></div>
<div class="a" style="left:1530.86px;top:152.80px;width:0.97px;height:1.6px;background:#569cd6;opacity:.45"></div>
<div class="a" style="left:1531.83px;top:152.80px;width:0.97px;height:1.6px;background:#808080;opacity:.45"></div>
<div class="a" style="left:1532.80px;top:152.80px;width:5.82px;height:1.6px;background:#cccccc;opacity:.45"></div>
<div class="a" style="left:1539.59px;top:152.80px;width:4.85px;height:1.6px;background:#cccccc;opacity:.45"></div>
<div class="a" style="left:1545.41px;top:152.80px;width:5.82px;height:1.6px;background:#cccccc;opacity:.45"></div>
<div class="a" style="left:1552.20px;top:152.80px;width:3.88px;height:1.6px;background:#cccccc;opacity:.45"></div>
<div class="a" style="left:1557.05px;top:152.80px;width:8.73px;height:1.6px;background:#cccccc;opacity:.45"></div>
<div class="a" style="left:1566.75px;top:152.80px;width:3.88px;height:1.6px;background:#cccccc;opacity:.45"></div>
<div class="a" style="left:1571.60px;top:152.80px;width:7.76px;height:1.6px;background:#cccccc;opacity:.45"></div>
<div class="a" style="left:1580.33px;top:152.80px;width:1.94px;height:1.6px;background:#808080;opacity:.45"></div>
<div class="a" style="left:1582.27px;top:152.80px;width:0.97px;height:1.6px;background:#569cd6;opacity:.45"></div>
<div class="a" style="left:1583.24px;top:152.80px;width:0.97px;height:1.6px;background:#808080;opacity:.45"></div>
<div class="a" style="left:1529.89px;top:154.80px;width:0.97px;height:1.6px;background:#808080;opacity:.45"></div>
<div class="a" style="left:1530.86px;top:154.80px;width:0.97px;height:1.6px;background:#569cd6;opacity:.45"></div>
<div class="a" style="left:1531.83px;top:154.80px;width:0.97px;height:1.6px;background:#808080;opacity:.45"></div>
<div class="a" style="left:1532.80px;top:154.80px;width:3.88px;height:1.6px;background:#cccccc;opacity:.45"></div>
<div class="a" style="left:1537.65px;top:154.80px;width:6.79px;height:1.6px;background:#cccccc;opacity:.45"></div>
<div class="a" style="left:1545.41px;top:154.80px;width:2.91px;height:1.6px;background:#cccccc;opacity:.45"></div>
<div class="a" style="left:1549.29px;top:154.80px;width:8.73px;height:1.6px;background:#cccccc;opacity:.45"></div>
<div class="a" style="left:1558.99px;top:154.80px;width:2.91px;height:1.6px;background:#cccccc;opacity:.45"></div>
<div class="a" style="left:1562.87px;top:154.80px;width:2.91px;height:1.6px;background:#cccccc;opacity:.45"></div>
<div class="a" style="left:1566.75px;top:154.80px;width:4.85px;height:1.6px;background:#cccccc;opacity:.45"></div>
<div class="a" style="left:1572.57px;top:154.80px;width:4.85px;height:1.6px;background:#cccccc;opacity:.45"></div>
<div class="a" style="left:1577.42px;top:154.80px;width:1.94px;height:1.6px;background:#808080;opacity:.45"></div>
<div class="a" style="left:1579.36px;top:154.80px;width:0.97px;height:1.6px;background:#569cd6;opacity:.45"></div>
<div class="a" style="left:1580.33px;top:154.80px;width:0.97px;height:1.6px;background:#808080;opacity:.45"></div>
<div class="a" style="left:1528.92px;top:156.80px;width:0.97px;height:1.6px;background:#808080;opacity:.45"></div>
<div class="a" style="left:1529.89px;top:156.80px;width:1.94px;height:1.6px;background:#569cd6;opacity:.45"></div>
<div class="a" style="left:1531.83px;top:156.80px;width:0.97px;height:1.6px;background:#808080;opacity:.45"></div>
<div class="a" style="left:1532.80px;top:156.80px;width:8.73px;height:1.6px;background:#cccccc;opacity:.45"></div>
<div class="a" style="left:1542.50px;top:156.80px;width:2.91px;height:1.6px;background:#cccccc;opacity:.45"></div>
<div class="a" style="left:1546.38px;top:156.80px;width:5.82px;height:1.6px;background:#cccccc;opacity:.45"></div>
<div class="a" style="left:1552.20px;top:156.80px;width:1.94px;height:1.6px;background:#808080;opacity:.45"></div>
<div class="a" style="left:1554.14px;top:156.80px;width:1.94px;height:1.6px;background:#569cd6;opacity:.45"></div>
<div class="a" style="left:1556.08px;top:156.80px;width:0.97px;height:1.6px;background:#808080;opacity:.45"></div>
<div class="a" style="left:1529.89px;top:158.80px;width:0.97px;height:1.6px;background:#808080;opacity:.45"></div>
<div class="a" style="left:1530.86px;top:158.80px;width:0.97px;height:1.6px;background:#569cd6;opacity:.45"></div>
<div class="a" style="left:1531.83px;top:158.80px;width:0.97px;height:1.6px;background:#808080;opacity:.45"></div>
<div class="a" style="left:1532.80px;top:158.80px;width:8.73px;height:1.6px;background:#cccccc;opacity:.45"></div>
<div class="a" style="left:1542.50px;top:158.80px;width:3.88px;height:1.6px;background:#cccccc;opacity:.45"></div>
<div class="a" style="left:1547.35px;top:158.80px;width:4.85px;height:1.6px;background:#cccccc;opacity:.45"></div>
<div class="a" style="left:1552.20px;top:158.80px;width:0.97px;height:1.6px;background:#808080;opacity:.45"></div>
<div class="a" style="left:1553.17px;top:158.80px;width:0.97px;height:1.6px;background:#569cd6;opacity:.45"></div>
<div class="a" style="left:1554.14px;top:158.80px;width:0.97px;height:1.6px;background:#808080;opacity:.45"></div>
<div class="a" style="left:1555.11px;top:158.80px;width:9.70px;height:1.6px;background:#cccccc;opacity:.45"></div>
<div class="a" style="left:1564.81px;top:158.80px;width:1.94px;height:1.6px;background:#808080;opacity:.45"></div>
<div class="a" style="left:1566.75px;top:158.80px;width:0.97px;height:1.6px;background:#569cd6;opacity:.45"></div>
<div class="a" style="left:1567.72px;top:158.80px;width:0.97px;height:1.6px;background:#808080;opacity:.45"></div>
<div class="a" style="left:1568.69px;top:158.80px;width:1.94px;height:1.6px;background:#808080;opacity:.45"></div>
<div class="a" style="left:1570.63px;top:158.80px;width:0.97px;height:1.6px;background:#569cd6;opacity:.45"></div>
<div class="a" style="left:1571.60px;top:158.80px;width:0.97px;height:1.6px;background:#808080;opacity:.45"></div>
<div class="a" style="left:1529.89px;top:160.80px;width:0.97px;height:1.6px;background:#808080;opacity:.45"></div>
<div class="a" style="left:1530.86px;top:160.80px;width:0.97px;height:1.6px;background:#569cd6;opacity:.45"></div>
<div class="a" style="left:1531.83px;top:160.80px;width:0.97px;height:1.6px;background:#808080;opacity:.45"></div>
<div class="a" style="left:1532.80px;top:160.80px;width:7.76px;height:1.6px;background:#cccccc;opacity:.45"></div>
<div class="a" style="left:1541.53px;top:160.80px;width:3.88px;height:1.6px;background:#cccccc;opacity:.45"></div>
<div class="a" style="left:1546.38px;top:160.80px;width:4.85px;height:1.6px;background:#cccccc;opacity:.45"></div>
<div class="a" style="left:1551.23px;top:160.80px;width:0.97px;height:1.6px;background:#808080;opacity:.45"></div>
<div class="a" style="left:1552.20px;top:160.80px;width:0.97px;height:1.6px;background:#569cd6;opacity:.45"></div>
<div class="a" style="left:1553.17px;top:160.80px;width:0.97px;height:1.6px;background:#808080;opacity:.45"></div>
<div class="a" style="left:1554.14px;top:160.80px;width:5.82px;height:1.6px;background:#cccccc;opacity:.45"></div>
<div class="a" style="left:1559.96px;top:160.80px;width:1.94px;height:1.6px;background:#808080;opacity:.45"></div>
<div class="a" style="left:1561.90px;top:160.80px;width:0.97px;height:1.6px;background:#569cd6;opacity:.45"></div>
<div class="a" style="left:1562.87px;top:160.80px;width:0.97px;height:1.6px;background:#808080;opacity:.45"></div>
<div class="a" style="left:1563.84px;top:160.80px;width:1.94px;height:1.6px;background:#808080;opacity:.45"></div>
<div class="a" style="left:1565.78px;top:160.80px;width:0.97px;height:1.6px;background:#569cd6;opacity:.45"></div>
<div class="a" style="left:1566.75px;top:160.80px;width:0.97px;height:1.6px;background:#808080;opacity:.45"></div>
<div class="a" style="left:1529.89px;top:162.80px;width:0.97px;height:1.6px;background:#808080;opacity:.45"></div>
<div class="a" style="left:1530.86px;top:162.80px;width:1.94px;height:1.6px;background:#569cd6;opacity:.45"></div>
<div class="a" style="left:1532.80px;top:162.80px;width:0.97px;height:1.6px;background:#808080;opacity:.45"></div>
<div class="a" style="left:1533.77px;top:162.80px;width:9.70px;height:1.6px;background:#cccccc;opacity:.45"></div>
<div class="a" style="left:1543.47px;top:162.80px;width:1.94px;height:1.6px;background:#808080;opacity:.45"></div>
<div class="a" style="left:1545.41px;top:162.80px;width:1.94px;height:1.6px;background:#569cd6;opacity:.45"></div>
<div class="a" style="left:1547.35px;top:162.80px;width:0.97px;height:1.6px;background:#808080;opacity:.45"></div>
<div class="a" style="left:1529.89px;top:164.80px;width:0.97px;height:1.6px;background:#808080;opacity:.45"></div>
<div class="a" style="left:1530.86px;top:164.80px;width:0.97px;height:1.6px;background:#569cd6;opacity:.45"></div>
<div class="a" style="left:1531.83px;top:164.80px;width:0.97px;height:1.6px;background:#808080;opacity:.45"></div>
<div class="a" style="left:1532.80px;top:164.80px;width:4.85px;height:1.6px;background:#cccccc;opacity:.45"></div>
<div class="a" style="left:1538.62px;top:164.80px;width:5.82px;height:1.6px;background:#cccccc;opacity:.45"></div>
<div class="a" style="left:1545.41px;top:164.80px;width:2.91px;height:1.6px;background:#cccccc;opacity:.45"></div>
<div class="a" style="left:1549.29px;top:164.80px;width:11.64px;height:1.6px;background:#cccccc;opacity:.45"></div>
<div class="a" style="left:1561.90px;top:164.80px;width:3.88px;height:1.6px;background:#cccccc;opacity:.45"></div>
<div class="a" style="left:1566.75px;top:164.80px;width:3.88px;height:1.6px;background:#cccccc;opacity:.45"></div>
<div class="a" style="left:1571.60px;top:164.80px;width:5.82px;height:1.6px;background:#cccccc;opacity:.45"></div>
<div class="a" style="left:1578.39px;top:164.80px;width:1.94px;height:1.6px;background:#cccccc;opacity:.45"></div>
<div class="a" style="left:1580.33px;top:164.80px;width:1.94px;height:1.6px;background:#808080;opacity:.45"></div>
<div class="a" style="left:1582.27px;top:164.80px;width:0.97px;height:1.6px;background:#569cd6;opacity:.45"></div>
<div class="a" style="left:1583.24px;top:164.80px;width:0.97px;height:1.6px;background:#808080;opacity:.45"></div>
<div class="a" style="left:1529.89px;top:166.80px;width:0.97px;height:1.6px;background:#808080;opacity:.45"></div>
<div class="a" style="left:1530.86px;top:166.80px;width:0.97px;height:1.6px;background:#569cd6;opacity:.45"></div>
<div class="a" style="left:1531.83px;top:166.80px;width:0.97px;height:1.6px;background:#808080;opacity:.45"></div>
<div class="a" style="left:1532.80px;top:166.80px;width:1.94px;height:1.6px;background:#cccccc;opacity:.45"></div>
<div class="a" style="left:1535.71px;top:166.80px;width:6.79px;height:1.6px;background:#cccccc;opacity:.45"></div>
<div class="a" style="left:1543.47px;top:166.80px;width:7.76px;height:1.6px;background:#cccccc;opacity:.45"></div>
<div class="a" style="left:1551.23px;top:166.80px;width:1.94px;height:1.6px;background:#808080;opacity:.45"></div>
<div class="a" style="left:1553.17px;top:166.80px;width:0.97px;height:1.6px;background:#569cd6;opacity:.45"></div>
<div class="a" style="left:1554.14px;top:166.80px;width:0.97px;height:1.6px;background:#808080;opacity:.45"></div>
<div class="a" style="left:1529.89px;top:168.80px;width:0.97px;height:1.6px;background:#808080;opacity:.45"></div>
<div class="a" style="left:1530.86px;top:168.80px;width:0.97px;height:1.6px;background:#569cd6;opacity:.45"></div>
<div class="a" style="left:1531.83px;top:168.80px;width:0.97px;height:1.6px;background:#808080;opacity:.45"></div>
<div class="a" style="left:1532.80px;top:168.80px;width:0.97px;height:1.6px;background:#cccccc;opacity:.45"></div>
<div class="a" style="left:1534.74px;top:168.80px;width:3.88px;height:1.6px;background:#cccccc;opacity:.45"></div>
<div class="a" style="left:1539.59px;top:168.80px;width:3.88px;height:1.6px;background:#cccccc;opacity:.45"></div>
<div class="a" style="left:1544.44px;top:168.80px;width:5.82px;height:1.6px;background:#cccccc;opacity:.45"></div>
<div class="a" style="left:1551.23px;top:168.80px;width:3.88px;height:1.6px;background:#cccccc;opacity:.45"></div>
<div class="a" style="left:1556.08px;top:168.80px;width:3.88px;height:1.6px;background:#cccccc;opacity:.45"></div>
<div class="a" style="left:1560.93px;top:168.80px;width:1.94px;height:1.6px;background:#cccccc;opacity:.45"></div>
<div class="a" style="left:1563.84px;top:168.80px;width:2.91px;height:1.6px;background:#cccccc;opacity:.45"></div>
<div class="a" style="left:1567.72px;top:168.80px;width:5.82px;height:1.6px;background:#cccccc;opacity:.45"></div>
<div class="a" style="left:1574.51px;top:168.80px;width:1.94px;height:1.6px;background:#cccccc;opacity:.45"></div>
<div class="a" style="left:1576.45px;top:168.80px;width:1.94px;height:1.6px;background:#808080;opacity:.45"></div>
<div class="a" style="left:1578.39px;top:168.80px;width:0.97px;height:1.6px;background:#569cd6;opacity:.45"></div>
<div class="a" style="left:1579.36px;top:168.80px;width:0.97px;height:1.6px;background:#808080;opacity:.45"></div>
<div class="a" style="left:1529.89px;top:170.80px;width:0.97px;height:1.6px;background:#808080;opacity:.45"></div>
<div class="a" style="left:1530.86px;top:170.80px;width:0.97px;height:1.6px;background:#569cd6;opacity:.45"></div>
<div class="a" style="left:1531.83px;top:170.80px;width:0.97px;height:1.6px;background:#808080;opacity:.45"></div>
<div class="a" style="left:1532.80px;top:170.80px;width:3.88px;height:1.6px;background:#cccccc;opacity:.45"></div>
<div class="a" style="left:1537.65px;top:170.80px;width:5.82px;height:1.6px;background:#cccccc;opacity:.45"></div>
<div class="a" style="left:1544.44px;top:170.80px;width:6.79px;height:1.6px;background:#cccccc;opacity:.45"></div>
<div class="a" style="left:1552.20px;top:170.80px;width:1.94px;height:1.6px;background:#cccccc;opacity:.45"></div>
<div class="a" style="left:1555.11px;top:170.80px;width:4.85px;height:1.6px;background:#cccccc;opacity:.45"></div>
<div class="a" style="left:1559.96px;top:170.80px;width:1.94px;height:1.6px;background:#808080;opacity:.45"></div>
<div class="a" style="left:1561.90px;top:170.80px;width:0.97px;height:1.6px;background:#569cd6;opacity:.45"></div>
<div class="a" style="left:1562.87px;top:170.80px;width:0.97px;height:1.6px;background:#808080;opacity:.45"></div>
<div class="a" style="left:1529.89px;top:172.80px;width:0.97px;height:1.6px;background:#808080;opacity:.45"></div>
<div class="a" style="left:1530.86px;top:172.80px;width:1.94px;height:1.6px;background:#569cd6;opacity:.45"></div>
<div class="a" style="left:1532.80px;top:172.80px;width:0.97px;height:1.6px;background:#808080;opacity:.45"></div>
<div class="a" style="left:1533.77px;top:172.80px;width:6.79px;height:1.6px;background:#cccccc;opacity:.45"></div>
<div class="a" style="left:1540.56px;top:172.80px;width:1.94px;height:1.6px;background:#808080;opacity:.45"></div>
<div class="a" style="left:1542.50px;top:172.80px;width:1.94px;height:1.6px;background:#569cd6;opacity:.45"></div>
<div class="a" style="left:1544.44px;top:172.80px;width:0.97px;height:1.6px;background:#808080;opacity:.45"></div>
<div class="a" style="left:1529.89px;top:174.80px;width:0.97px;height:1.6px;background:#808080;opacity:.45"></div>
<div class="a" style="left:1530.86px;top:174.80px;width:0.97px;height:1.6px;background:#569cd6;opacity:.45"></div>
<div class="a" style="left:1531.83px;top:174.80px;width:0.97px;height:1.6px;background:#808080;opacity:.45"></div>
<div class="a" style="left:1532.80px;top:174.80px;width:1.94px;height:1.6px;background:#cccccc;opacity:.45"></div>
<div class="a" style="left:1535.71px;top:174.80px;width:2.91px;height:1.6px;background:#cccccc;opacity:.45"></div>
<div class="a" style="left:1539.59px;top:174.80px;width:3.88px;height:1.6px;background:#cccccc;opacity:.45"></div>
<div class="a" style="left:1544.44px;top:174.80px;width:1.94px;height:1.6px;background:#cccccc;opacity:.45"></div>
<div class="a" style="left:1547.35px;top:174.80px;width:5.82px;height:1.6px;background:#cccccc;opacity:.45"></div>
<div class="a" style="left:1554.14px;top:174.80px;width:1.94px;height:1.6px;background:#cccccc;opacity:.45"></div>
<div class="a" style="left:1557.05px;top:174.80px;width:4.85px;height:1.6px;background:#cccccc;opacity:.45"></div>
<div class="a" style="left:1562.87px;top:174.80px;width:1.94px;height:1.6px;background:#cccccc;opacity:.45"></div>
<div class="a" style="left:1565.78px;top:174.80px;width:3.88px;height:1.6px;background:#cccccc;opacity:.45"></div>
<div class="a" style="left:1570.63px;top:174.80px;width:3.88px;height:1.6px;background:#cccccc;opacity:.45"></div>
<div class="a" style="left:1575.48px;top:174.80px;width:7.76px;height:1.6px;background:#cccccc;opacity:.45"></div>
<div class="a" style="left:1583.24px;top:174.80px;width:1.94px;height:1.6px;background:#808080;opacity:.45"></div>
<div class="a" style="left:1585.18px;top:174.80px;width:0.97px;height:1.6px;background:#569cd6;opacity:.45"></div>
<div class="a" style="left:1586.15px;top:174.80px;width:0.97px;height:1.6px;background:#808080;opacity:.45"></div>
<div class="a" style="left:1529.89px;top:176.80px;width:0.97px;height:1.6px;background:#808080;opacity:.45"></div>
<div class="a" style="left:1530.86px;top:176.80px;width:0.97px;height:1.6px;background:#569cd6;opacity:.45"></div>
<div class="a" style="left:1531.83px;top:176.80px;width:0.97px;height:1.6px;background:#808080;opacity:.45"></div>
<div class="a" style="left:1532.80px;top:176.80px;width:0.97px;height:1.6px;background:#cccccc;opacity:.45"></div>
<div class="a" style="left:1534.74px;top:176.80px;width:4.85px;height:1.6px;background:#cccccc;opacity:.45"></div>
<div class="a" style="left:1540.56px;top:176.80px;width:6.79px;height:1.6px;background:#cccccc;opacity:.45"></div>
<div class="a" style="left:1548.32px;top:176.80px;width:2.91px;height:1.6px;background:#cccccc;opacity:.45"></div>
<div class="a" style="left:1552.20px;top:176.80px;width:1.94px;height:1.6px;background:#cccccc;opacity:.45"></div>
<div class="a" style="left:1555.11px;top:176.80px;width:7.76px;height:1.6px;background:#cccccc;opacity:.45"></div>
<div class="a" style="left:1563.84px;top:176.80px;width:6.79px;height:1.6px;background:#cccccc;opacity:.45"></div>
<div class="a" style="left:1571.60px;top:176.80px;width:6.79px;height:1.6px;background:#cccccc;opacity:.45"></div>
<div class="a" style="left:1579.36px;top:176.80px;width:6.79px;height:1.6px;background:#cccccc;opacity:.45"></div>
<div class="a" style="left:1586.15px;top:176.80px;width:1.94px;height:1.6px;background:#808080;opacity:.45"></div>
<div class="a" style="left:1588.09px;top:176.80px;width:0.97px;height:1.6px;background:#569cd6;opacity:.45"></div>
<div class="a" style="left:1589.06px;top:176.80px;width:0.97px;height:1.6px;background:#808080;opacity:.45"></div>
<div class="a" style="left:1529.89px;top:178.80px;width:0.97px;height:1.6px;background:#808080;opacity:.45"></div>
<div class="a" style="left:1530.86px;top:178.80px;width:0.97px;height:1.6px;background:#569cd6;opacity:.45"></div>
<div class="a" style="left:1531.83px;top:178.80px;width:0.97px;height:1.6px;background:#808080;opacity:.45"></div>
<div class="a" style="left:1532.80px;top:178.80px;width:3.88px;height:1.6px;background:#cccccc;opacity:.45"></div>
<div class="a" style="left:1537.65px;top:178.80px;width:1.94px;height:1.6px;background:#cccccc;opacity:.45"></div>
<div class="a" style="left:1540.56px;top:178.80px;width:9.70px;height:1.6px;background:#cccccc;opacity:.45"></div>
<div class="a" style="left:1551.23px;top:178.80px;width:4.85px;height:1.6px;background:#cccccc;opacity:.45"></div>
<div class="a" style="left:1557.05px;top:178.80px;width:2.91px;height:1.6px;background:#cccccc;opacity:.45"></div>
<div class="a" style="left:1560.93px;top:178.80px;width:5.82px;height:1.6px;background:#cccccc;opacity:.45"></div>
<div class="a" style="left:1567.72px;top:178.80px;width:6.79px;height:1.6px;background:#cccccc;opacity:.45"></div>
<div class="a" style="left:1575.48px;top:178.80px;width:7.76px;height:1.6px;background:#cccccc;opacity:.45"></div>
<div class="a" style="left:1583.24px;top:178.80px;width:1.94px;height:1.6px;background:#808080;opacity:.45"></div>
<div class="a" style="left:1585.18px;top:178.80px;width:0.97px;height:1.6px;background:#569cd6;opacity:.45"></div>
<div class="a" style="left:1586.15px;top:178.80px;width:0.97px;height:1.6px;background:#808080;opacity:.45"></div>
<div class="a" style="left:1526.01px;top:182.80px;width:1.94px;height:1.6px;background:#808080;opacity:.45"></div>
<div class="a" style="left:1527.95px;top:182.80px;width:2.91px;height:1.6px;background:#569cd6;opacity:.45"></div>
<div class="a" style="left:1530.86px;top:182.80px;width:0.97px;height:1.6px;background:#808080;opacity:.45"></div>
<div class="a" style="left:1522.13px;top:184.80px;width:1.94px;height:1.6px;background:#808080;opacity:.45"></div>
<div class="a" style="left:1524.07px;top:184.80px;width:2.91px;height:1.6px;background:#569cd6;opacity:.45"></div>
<div class="a" style="left:1526.98px;top:184.80px;width:0.97px;height:1.6px;background:#808080;opacity:.45"></div>
<div class="a" style="left:1518.25px;top:188.80px;width:1.94px;height:1.6px;background:#808080;opacity:.45"></div>
<div class="a" style="left:1520.19px;top:188.80px;width:3.88px;height:1.6px;background:#569cd6;opacity:.45"></div>
<div class="a" style="left:1524.07px;top:188.80px;width:0.97px;height:1.6px;background:#808080;opacity:.45"></div>
<div class="a" style="left:1518.25px;top:190.80px;width:1.94px;height:1.6px;background:#808080;opacity:.45"></div>
<div class="a" style="left:1520.19px;top:190.80px;width:3.88px;height:1.6px;background:#569cd6;opacity:.45"></div>
<div class="a" style="left:1524.07px;top:190.80px;width:0.97px;height:1.6px;background:#808080;opacity:.45"></div>
</div>
<div class="a" style="left:1630px;top:27px;width:1px;height:878px;background:#0a0a0a"></div>
<div class="a" style="left:1631px;top:543px;width:16px;height:2px;background:#a0a0a0"></div>
<div id="mini"></div>
</div>
<div id="status" class="a">
 <div class="a" style="left:0;top:0;width:43px;height:27px;background:#0078d4"></div>
 <svg class="a" style="left:15px;top:4.2px" width="13" height="16" viewBox="0 0 13 16"><path d="M1 5.7 L6.9 9.4 L1 14.5 M12 0.6 L6.9 5 L12 10.1" stroke="#ffffff" stroke-width="1.3" fill="none"/></svg>
 <svg class="a" style="left:53px;top:3.6px" width="17" height="17" viewBox="0 0 17 17"><circle cx="8.5" cy="8.5" r="7.6" stroke="#cccccc" stroke-width="1.3" fill="none"/><path d="M5.5 5.5 L11.5 11.5 M11.5 5.5 L5.5 11.5" stroke="#cccccc" stroke-width="1.3"/></svg>
 <div class="a stt" style="left:74px">0</div>
 <svg class="a" style="left:87px;top:3.4px" width="17" height="17" viewBox="0 0 17 17"><path d="M8.5 1.5 L15.8 15.3 H1.2 Z" stroke="#cccccc" stroke-width="1.3" fill="none" stroke-linejoin="round"/><path d="M8.5 6 V11 M8.5 12.5 V13.8" stroke="#cccccc" stroke-width="1.3"/></svg>
 <div class="a stt" style="left:108px">0</div>
 <svg class="a" style="left:137.5px;top:3.2px" width="17" height="17" viewBox="0 0 17 17"><circle cx="8.5" cy="6" r="1.6" stroke="#cccccc" stroke-width="1.2" fill="none"/><path d="M5.3 2.8 A4.5 4.5 0 0 0 5.3 9.2 M11.7 2.8 A4.5 4.5 0 0 1 11.7 9.2 M3 1 A7 7 0 0 0 3 11 M14 1 A7 7 0 0 1 14 11 M8.5 7.6 L5 16 M8.5 7.6 L12 16 M6.3 12.5 H10.7" stroke="#cccccc" stroke-width="1.2" fill="none"/></svg>
 <div class="a stt" style="left:157.5px">0</div>
 <div class="a stt" style="left:1414px;transform:scaleX(.93)">Ln 71, Col 39</div>
 <div class="a stt" style="left:1519px;transform:scaleX(.89)">Spaces: 4</div>
 <div class="a stt" style="left:1599.5px;transform:scaleX(.91)">UTF-8</div>
 <div class="a stt" style="left:1659px;transform:scaleX(.84)">CRLF</div>
 <div class="a stt" style="left:1712px;transform:scaleX(.92)">HTML</div>
 <svg class="a" style="left:1771.5px;top:5px" width="17" height="17" viewBox="0 0 17 17"><circle cx="8.5" cy="8.5" r="7.5" stroke="#cccccc" stroke-width="1.3" fill="none"/><path d="M3.2 13.8 L13.8 3.2" stroke="#cccccc" stroke-width="1.3"/></svg>
 <div class="a stt" style="left:1793.5px;transform:scaleX(.93)">Port : 5500</div>
 <svg class="a" style="left:1884px;top:4px" width="18" height="19" viewBox="0 0 18 19"><path d="M8 2.5 A5 5 0 0 0 3 7.5 V12 L1.5 14.5 H14.5 L13 12 V9" stroke="#cccccc" stroke-width="1.3" fill="none" stroke-linejoin="round"/><path d="M6 16.5 A2 2 0 0 0 10 16.5" stroke="#cccccc" stroke-width="1.3" fill="none"/><circle cx="14" cy="3.8" r="2.8" fill="#cccccc"/></svg>
</div>

<div id="taskbar" class="a">
 <div class="a" style="left:0;top:0;width:1920px;height:1px;background:linear-gradient(90deg,#454538,#44433a 50%,#4a4746)"></div>
 <!-- widgets -->
 <div class="a" style="left:26px;top:16px;width:30px;height:28px;border-radius:2.5px;background:linear-gradient(135deg,#1078d8,#0b5cb0)"></div>
 <div class="a" style="left:29px;top:19px;width:11px;height:22px;border-radius:2px;background:#f8f6f4"></div>
 <div class="a" style="left:42px;top:19px;width:11px;height:12px;background:#6ad8ff"></div>
 <div class="a" style="left:42px;top:31.5px;width:11px;height:4.5px;background:#1caeff"></div>
 <div class="a" style="left:42px;top:36.5px;width:11px;height:4.5px;background:#0890f8"></div>
 <!-- start -->
 <div class="a" style="left:585px;top:16px;width:14px;height:14px;border-radius:2px 0 0 0;background:linear-gradient(135deg,#8fe2ff,#3cc4ff)"></div>
 <div class="a" style="left:600px;top:16px;width:14px;height:14px;border-radius:0 2px 0 0;background:linear-gradient(135deg,#5fd4ff,#22b4ff)"></div>
 <div class="a" style="left:585px;top:31px;width:14px;height:14px;border-radius:0 0 0 2px;background:linear-gradient(135deg,#44c8ff,#18a8f8)"></div>
 <div class="a" style="left:600px;top:31px;width:14px;height:14px;border-radius:0 0 2px 0;background:linear-gradient(135deg,#22b2ff,#0a8ef0)"></div>
 <!-- search -->
 <div class="a" style="left:632px;top:11px;width:273px;height:38px;border-radius:19px;background:#f1f1f0"></div>
 <svg class="a" style="left:645px;top:20px" width="20" height="20" viewBox="0 0 20 20"><circle cx="8.2" cy="8.2" r="6.5" stroke="#1e1e1e" stroke-width="1.8" fill="none"/><path d="M13 13 L18.2 18.2" stroke="#1e1e1e" stroke-width="2.2" stroke-linecap="round"/></svg>
 <div class="a" style="left:677.5px;top:12px;font-size:17.5px;line-height:38px;color:#5a5a5a;white-space:nowrap;transform:scaleX(.93);transform-origin:left">Search</div>
 <!-- task view -->
 <div class="a" style="left:921px;top:23.75px;width:22.5px;height:20px;border-radius:2px;background:linear-gradient(180deg,#8a8a8a,#5e5e5e)"></div>
 <div class="a" style="left:928.5px;top:16px;width:22.5px;height:20.5px;border-radius:2px;background:linear-gradient(180deg,#f4f4f4,#dcdcdc);opacity:.92"></div>
 <!-- help -->
 <div class="a" style="left:976px;top:15px;width:30px;height:30px;border-radius:50%;background:#0c98d8;border:1.5px solid #f0f0f0"></div>
 <div class="a" style="left:983px;top:16px;font-size:23px;font-weight:bold;line-height:28px;color:#ffffff">?</div>
 <div class="a" style="left:992.25px;top:8.75px;width:20px;height:20px;border-radius:50%;background:#fec20f"></div>
 <!-- folder -->
 <div class="a" style="left:1030.6px;top:16.9px;width:12px;height:6px;border-radius:2px 2px 0 0;background:#e3a912"></div>
 <div class="a" style="left:1030.6px;top:20px;width:30.7px;height:23.75px;border-radius:1.5px;background:linear-gradient(180deg,#fcd86a,#f3be2d)"></div>
 <div class="a" style="left:1036px;top:36px;width:19.6px;height:7.75px;border-radius:2px 2px 0 0;background:#1672cc"></div>
 <div class="a" style="left:1039px;top:38.5px;width:13.6px;height:1.3px;background:#0b4e98"></div>
 <div class="a" style="left:1042px;top:50px;width:8px;height:4px;border-radius:2px;background:#9d9d98"></div>
 <!-- store -->
 <div class="a" style="left:1093px;top:16px;width:15px;height:8px;border:2px solid #1ab0f0;border-bottom:none;border-radius:2px 2px 0 0"></div>
 <div class="a" style="left:1086px;top:19.75px;width:29px;height:25.25px;border-radius:2px 2px 5px 5px;background:linear-gradient(180deg,#ffffff,#e4e4e4)"></div>
 <div class="a" style="left:1095px;top:27px;width:5px;height:5px;background:#f25022"></div>
 <div class="a" style="left:1101px;top:27px;width:5px;height:5px;background:#7fba00"></div>
 <div class="a" style="left:1095px;top:33px;width:5px;height:5px;background:#00a4ef"></div>
 <div class="a" style="left:1101px;top:33px;width:5px;height:5px;background:#ffb900"></div>
 <!-- mcafee -->
 <svg class="a" style="left:1142px;top:14.9px" width="28" height="30.5" viewBox="0 0 28 30.5"><path d="M0.5 0.3 L13.6 5.8 L26.8 0.3 V24 L13.6 29.9 L0.5 24 Z M6.2 9 V20.7 L13.6 23.6 L21 20.7 V9 L13.6 12.1 Z" fill="#c22c2c" fill-rule="evenodd"/></svg>
 <!-- edge -->
 <svg class="a" style="left:1196px;top:1034.6px;margin-top:-1020px" width="30.5" height="30.6" viewBox="0 0 30.5 30.6"><defs><linearGradient id="eg1" x1="0" y1="0.2" x2="1" y2="0.8"><stop offset="0" stop-color="#2bb6f2"/><stop offset=".5" stop-color="#2ec4c8"/><stop offset="1" stop-color="#6ae85a"/></linearGradient><linearGradient id="eg2" x1="0" y1="0" x2="0.3" y2="1"><stop offset="0" stop-color="#168ee0"/><stop offset="1" stop-color="#0b78d6"/></linearGradient></defs>
 <circle cx="15.2" cy="15.3" r="15.2" fill="url(#eg1)"/>
 <path d="M13.5 17 C16.5 20.5 22 20.3 30.5 19.3 L30.5 30.6 L12 30.6 Z" fill="#29261a"/>
 <path d="M0.2 12 C3 8.2 8 7 12 8.5 C15 9.5 17 11 17.8 12.5 C14.5 11 11.5 13 11.5 16 C11.5 20 16 23 21 23 C24 23 26.5 22.6 27.9 22 C25.2 27.2 20.5 30.6 15.2 30.6 C6.8 30.6 0 23.8 0 15.3 Z" fill="url(#eg2)"/>
 <path d="M11.5 16 C11.5 20 16 23 21 23 C24 23 26.5 22.6 27.9 22 C25.2 27.2 20.5 30.6 15.2 30.6 C11 30.3 8.5 27 8.3 22 C8.2 18 9.5 15 11.8 13.3 Z" fill="#0d5bac"/>
 <ellipse cx="14.9" cy="16.1" rx="3.1" ry="3.7" fill="#29261a"/>
 </svg>
 <div class="a" style="left:1207px;top:50.2px;width:8px;height:3.7px;border-radius:2px;background:#9d9d98"></div>
 <!-- vscode active -->
 <div class="a" style="left:1241px;top:5px;width:50px;height:50px;border-radius:5px;background:rgba(255,255,255,.08);border:1px solid rgba(255,255,255,.03)"></div>
 <svg class="a" style="left:1250.9px;top:14.9px" width="30" height="30" viewBox="0 0 100 100">
  <path d="M75 3 L75 29 L16 77 Q8 82 3 75 L3 72 Q3 68 8 64 Z" fill="#0a7cc6"/>
  <path d="M75 97 L75 71 L16 23 Q8 18 3 25 L3 28 Q3 32 8 36 Z" fill="#0d90dc"/>
  <path d="M72 2 L97 14 V86 L72 98 Z" fill="#1fa8f2"/>
 </svg>
 <div class="a" style="left:1256px;top:50.2px;width:20px;height:3.7px;border-radius:2px;background:#4cc2ff"></div>
 <!-- photos -->
 <div class="a" style="left:1307.8px;top:17px;width:26.2px;height:26.3px;border-radius:4px;background:linear-gradient(160deg,#1d8ce0 0%,#3a74d0 50%,#7c5ac8 100%);overflow:hidden">
  <svg class="a" style="left:0;top:0" width="26.2" height="26.3" viewBox="0 0 26 26"><path d="M0 24 L13 9 L26 21 V26 H0 Z" fill="#3dc0f5"/><path d="M7 26 L17 14 L26 22 V26 Z" fill="#1a8ee0"/><circle cx="19.5" cy="5" r="2.6" fill="#f2f4ff"/></svg>
 </div>
 <div class="a" style="left:1317px;top:50.2px;width:8px;height:3.7px;border-radius:2px;background:#9d9d98"></div>
 <!-- tray -->
 <svg class="a" style="left:1515px;top:24px" width="16" height="11" viewBox="0 0 16 11"><path d="M1 9.5 L8 2 L15 9.5" stroke="#ffffff" stroke-width="1.6" fill="none"/></svg>
 <svg class="a" style="left:1552px;top:19.5px" width="22" height="22" viewBox="0 0 22 22"><path d="M3 10 A8 8 0 0 1 17.5 5.5 M19 12 A8 8 0 0 1 4.5 16.5" stroke="#f0f0f0" stroke-width="1.3" fill="none"/><path d="M14.5 5.5 H18 V2" stroke="#f0f0f0" stroke-width="1.3" fill="none"/><path d="M7.5 16.5 H4 V20" stroke="#f0f0f0" stroke-width="1.3" fill="none"/><circle cx="15.8" cy="15" r="5" fill="#f7920f"/></svg>
 <svg class="a" style="left:1593px;top:22px" width="22" height="19" viewBox="0 0 22 19"><path d="M3 15 Q0 15 0 11.5 Q0 8 3.5 8 Q4.5 3 9.5 3 Q13.5 3 15 6.5 Q18 6.5 18.5 9.5 L14 15 Z" fill="#d8d8d8"/><path d="M6 7 Q7 1 12 1 Q16 1 17 5 Q17 7 15 7 Z" fill="#9a9a9a"/><circle cx="14.2" cy="12" r="5.8" fill="#ffffff"/><path d="M10.6 11.3 A3.7 3.7 0 0 1 17.6 10.6 M17.8 12.8 A3.7 3.7 0 0 1 10.8 13.5" stroke="#1a74d4" stroke-width="1.4" fill="none"/><path d="M16.2 9.5 L18 11.2 L18.2 8.8 Z M12.2 14.5 L10.4 12.8 L10.2 15.2 Z" fill="#1a74d4"/></svg>
 <div class="a" style="left:1636.5px;top:0;font-size:15.5px;line-height:60px;color:#ffffff;white-space:nowrap;transform:scaleX(.88);transform-origin:left">ENG</div>
 <svg class="a" style="left:1687.5px;top:19.5px" width="22" height="22" viewBox="0 0 22 22"><circle cx="10" cy="10" r="8.8" stroke="#f0f0f0" stroke-width="1.2" fill="none"/><ellipse cx="10" cy="10" rx="4" ry="8.8" stroke="#f0f0f0" stroke-width="1.2" fill="none"/><path d="M1.5 7 H18.5 M1.5 13 H10" stroke="#f0f0f0" stroke-width="1.2"/><circle cx="15.2" cy="15.2" r="5.6" fill="#262320"/><circle cx="15.2" cy="15.2" r="4.8" stroke="#f0f0f0" stroke-width="1.2" fill="none"/><path d="M11.9 18.5 L18.5 11.9" stroke="#f0f0f0" stroke-width="1.2"/></svg>
 <svg class="a" style="left:1717.5px;top:20px" width="22" height="20" viewBox="0 0 22 20"><path d="M1 7 H5 L10.5 2 V18 L5 13 H1 Z" stroke="#f0f0f0" stroke-width="1.3" fill="none" stroke-linejoin="round"/><path d="M13.5 7 Q15 10 13.5 13 M16 4.5 Q19 10 16 15.5 M18.5 2 Q22.5 10 18.5 18" stroke="#f0f0f0" stroke-width="1.3" fill="none"/></svg>
 <svg class="a" style="left:1747.5px;top:23.5px" width="22" height="14" viewBox="0 0 22 14"><rect x="0.7" y="0.7" width="17" height="12" rx="2.5" stroke="#f0f0f0" stroke-width="1.3" fill="none"/><rect x="3" y="3" width="4.5" height="7.5" rx="0.8" fill="#f0f0f0"/><path d="M19.5 4.5 V9" stroke="#f0f0f0" stroke-width="2"/></svg>
 <div class="a" style="left:1829px;top:9px;width:37px;font-size:15px;line-height:20px;color:#ffffff;text-align:right;white-space:nowrap">03:52</div>
 <div class="a" style="left:1766px;top:29.5px;width:100px;font-size:15px;line-height:20px;color:#ffffff;text-align:right;white-space:nowrap">30/06/2024</div>
 <svg class="a" style="left:1876.5px;top:20.5px" width="17" height="20" viewBox="0 0 17 20"><path d="M8.5 0.5 Q2 0.5 2 7.5 V12.5 L0 15.5 H17 L15 12.5 V7.5 Q15 0.5 8.5 0.5 Z" fill="#93dcfa"/><path d="M5.5 17 Q8.5 20.5 11.5 17 Z" fill="#93dcfa"/></svg>
</div>

</body></html>
